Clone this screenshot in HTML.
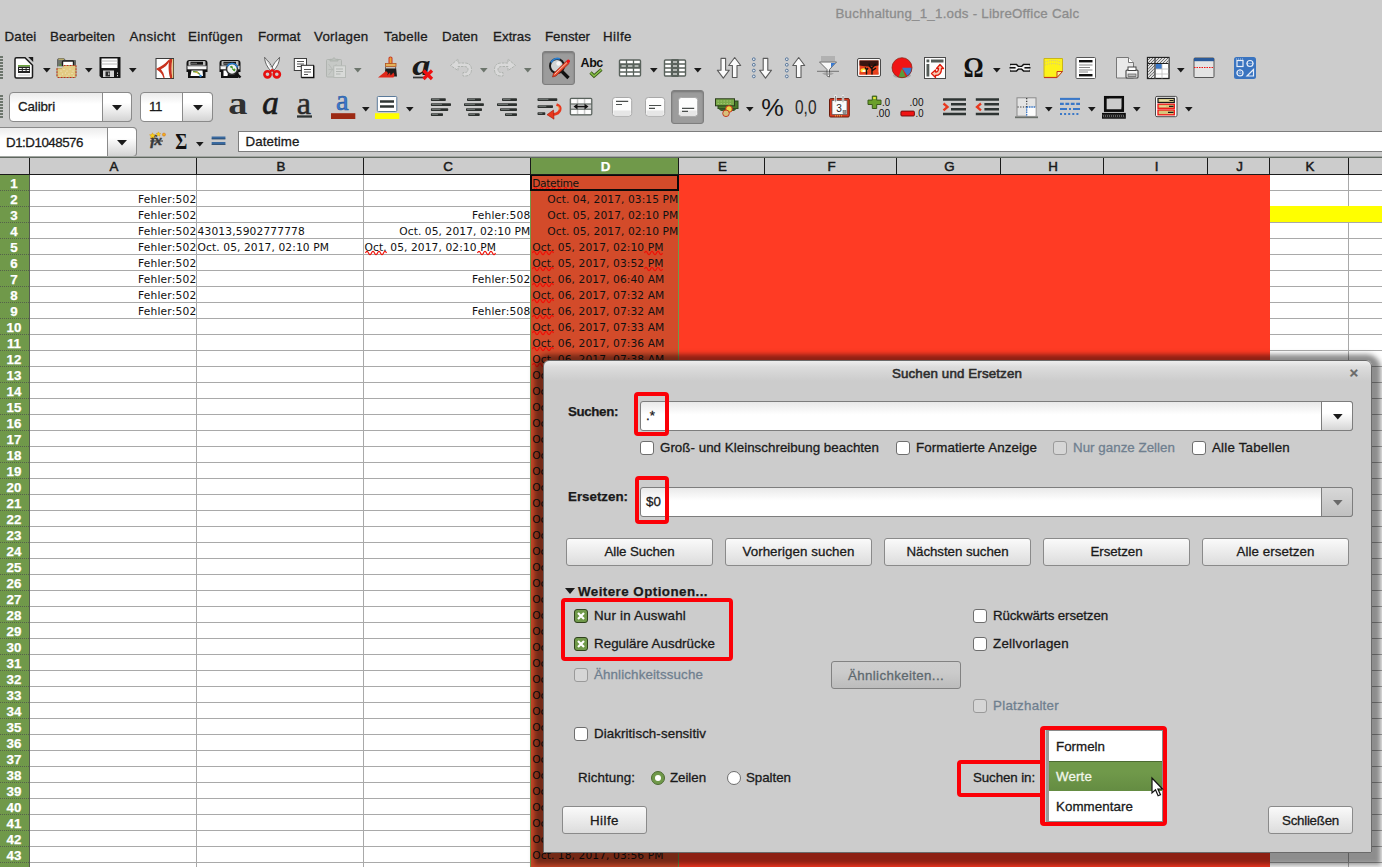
<!DOCTYPE html>
<html lang="de"><head><meta charset="utf-8"><title>Buchhaltung_1_1.ods - LibreOffice Calc</title>
<style>
html,body{margin:0;padding:0}
body{width:1382px;height:867px;overflow:hidden;background:#cccccc;position:relative;font-family:"Liberation Sans",sans-serif}
.t{position:absolute;white-space:pre;display:block}
.k{-webkit-text-stroke:.3px currentColor}
.kb{-webkit-text-stroke:.25px currentColor}
.r{position:absolute;box-sizing:border-box}
svg{position:absolute;overflow:visible}
.btn{position:absolute;box-sizing:border-box;border:1px solid #8a8a8a;border-radius:3px;background:linear-gradient(#fafafa,#dcdcdc)}
.inp{position:absolute;box-sizing:border-box;border:1px solid #7d7d7d;border-radius:3px;background:linear-gradient(#e9e9e9 0,#fff 45%)}
.cb{position:absolute;box-sizing:border-box;width:14px;height:14px;border:1px solid #6e6e6e;border-radius:3px;background:#fff}
.cb.dis{background:#d6d6d6;border-color:#9a9a9a}
.cb.on{background:#70994a;border-color:#2f421d}
.rb{position:absolute;box-sizing:border-box;width:14px;height:14px;border:1px solid #6e6e6e;border-radius:50%;background:#fff}
.ann{position:absolute;box-sizing:border-box;border:4px solid #fb0007;border-radius:4px}
</style></head><body>

<span class="t k" style="left:835.50px;top:4.88px;font:400 13.33px/17px 'Liberation Sans', sans-serif;color:#8c8c8c;letter-spacing:0.226px;">Buchhaltung_1_1.ods - LibreOffice Calc</span>
<span class="t k" style="left:4.50px;top:27.68px;font:400 13.33px/17px 'Liberation Sans', sans-serif;color:#1c1c1c;letter-spacing:0.176px;">Datei</span>
<span class="t k" style="left:50.00px;top:27.68px;font:400 13.33px/17px 'Liberation Sans', sans-serif;color:#1c1c1c;letter-spacing:0.052px;">Bearbeiten</span>
<span class="t k" style="left:129.50px;top:27.68px;font:400 13.33px/17px 'Liberation Sans', sans-serif;color:#1c1c1c;letter-spacing:0.327px;">Ansicht</span>
<span class="t k" style="left:188.00px;top:27.68px;font:400 13.33px/17px 'Liberation Sans', sans-serif;color:#1c1c1c;letter-spacing:0.297px;">Einfügen</span>
<span class="t k" style="left:258.00px;top:27.68px;font:400 13.33px/17px 'Liberation Sans', sans-serif;color:#1c1c1c;letter-spacing:0.047px;">Format</span>
<span class="t k" style="left:314.00px;top:27.68px;font:400 13.33px/17px 'Liberation Sans', sans-serif;color:#1c1c1c;letter-spacing:0.234px;">Vorlagen</span>
<span class="t k" style="left:384.00px;top:27.68px;font:400 13.33px/17px 'Liberation Sans', sans-serif;color:#1c1c1c;letter-spacing:0.251px;">Tabelle</span>
<span class="t k" style="left:442.00px;top:27.68px;font:400 13.33px/17px 'Liberation Sans', sans-serif;color:#1c1c1c;letter-spacing:0.086px;">Daten</span>
<span class="t k" style="left:493.00px;top:27.68px;font:400 13.33px/17px 'Liberation Sans', sans-serif;color:#1c1c1c;letter-spacing:0.037px;">Extras</span>
<span class="t k" style="left:545.00px;top:27.68px;font:400 13.33px/17px 'Liberation Sans', sans-serif;color:#1c1c1c;letter-spacing:-0.027px;">Fenster</span>
<span class="t k" style="left:603.00px;top:27.68px;font:400 13.33px/17px 'Liberation Sans', sans-serif;color:#1c1c1c;letter-spacing:0.467px;">Hilfe</span>
<div class="r" style="left:0;top:56px;width:3px;height:24px;background:repeating-linear-gradient(#6c756c 0,#6c756c 2px,transparent 2px,transparent 3px)"></div>
<div class="r" style="left:0;top:95px;width:3px;height:24px;background:repeating-linear-gradient(#6c756c 0,#6c756c 2px,transparent 2px,transparent 3px)"></div>
<div class="r" style="left:542px;top:51px;width:33px;height:34px;background:#9c9c9c;border:1px solid #7e7e7e;border-radius:3px;box-shadow:inset 0 1px 2px rgba(0,0,0,.25)"></div>
<svg style="left:12.0px;top:56.0px" width="24" height="24" viewBox="0 0 24 24"><path d="M4.500 1.700h8.500l7.500 7.500v11.300q0 1.500-1.500 1.500h-14.500q-1.500 0-1.500-1.500v-17.300q0-1.500 1.500-1.500z" fill="#fdfdfd" stroke="#1c1c1c" stroke-width="1.500"/><path d="M16.200 1h5v5z" fill="#1c1c1c"/><rect x="6" y="9" width="12" height="1.700" fill="#6aa33a"/><rect x="6" y="10.700" width="12" height="6.300" fill="#222"/><path d="M7 12.500h2.800M10.800 12.500h2.800M14.600 12.500h2.600M7 14.500h2.800M10.800 14.500h2.800M14.600 14.500h2.600" stroke="#f4f4f4" stroke-width="1.100"/><path d="M6 19h12" stroke="#c4c4c4" stroke-width="1"/></svg>
<svg style="left:55.0px;top:56.0px" width="24" height="24" viewBox="0 0 24 24"><path d="M2.500 4q0-1.500 1.500-1.500h5l1.500 2h10v6h-18z" fill="#6f746c" stroke="#555" stroke-width=".8"/><path d="M3.500 3.200h5.500" stroke="#d8c46a" stroke-width="1"/><rect x="7.500" y="5" width="11" height="6" rx=".8" fill="#fff" stroke="#1c1c1c" stroke-width="1.400"/><path d="M2 12h5l1.500-2.500h12.500v11q0 1-1 1h-17q-1 0-1-1z" fill="#e2ca82" stroke="#8a7a4a" stroke-width=".8"/><path d="M9 9.500h12v11.500M2 12.500v8.500M3 21.500h17" stroke="#d0201a" stroke-width="1.100" stroke-dasharray="1.200 1.800" fill="none"/><path d="M2.500 11h5.500" stroke="#f4f4f4" stroke-width="1"/><path d="M4 9.800l1.300-2.300 1.300 2.300z" fill="#4a9a2a"/><g fill="#f2ead0"><circle cx="6" cy="15" r=".6"/><circle cx="9" cy="13.500" r=".6"/><circle cx="12" cy="15" r=".6"/><circle cx="15" cy="13" r=".6"/><circle cx="18" cy="15" r=".6"/><circle cx="7.500" cy="18" r=".6"/><circle cx="10.500" cy="17" r=".6"/><circle cx="14" cy="18" r=".6"/><circle cx="17" cy="17.500" r=".6"/><circle cx="5" cy="20" r=".6"/><circle cx="12" cy="20" r=".6"/><circle cx="18.500" cy="20" r=".6"/></g></svg>
<svg style="left:98.0px;top:56.0px" width="24" height="24" viewBox="0 0 24 24"><path d="M1.500 1.500q0-.5.5-.5h20q.5 0 .5.500v20q0 .5-.5.500h-18.500l-2-2z" fill="#161616"/><rect x="3.500" y="2.500" width="16" height="9.500" fill="#fdfdfd"/><path d="M3.500 5h16M3.500 8h16" stroke="#b0b0b0" stroke-width=".9"/><rect x="5" y="14.500" width="11" height="6.500" fill="#d4d4d4"/><rect x="7.500" y="15.500" width="4.500" height="5" fill="#2a2a2a"/><path d="M10 16.500h1.500v2.500h-1.500z" fill="#aaa"/><path d="M19.500 16.500v1.300M19.500 19v1.300" stroke="#ddd" stroke-width="1"/></svg>
<svg style="left:152.5px;top:56.0px" width="24" height="24" viewBox="0 0 24 24"><rect x="3" y="2.500" width="17.500" height="20" fill="#fdfdfd" stroke="#3a3a3a" stroke-width="1"/><path d="M16 4.500c-3 3.500-7 6.500-12 8.500 3.500 2 6 5 7 8.500-.5-3-2-6-4-8.500 4-2 7.500-4.500 9-8.500z" fill="#c8321e" stroke="#c8321e" stroke-width="1.300" stroke-linejoin="round"/><path d="M16.500 3c-1.300 5-1.300 13 .8 19.500l2-.5c-1-6-1-13 0-19z" fill="#c8321e"/><path d="M19.800 3v19" stroke="#e0b04a" stroke-width=".9"/></svg>
<svg style="left:185.0px;top:56.0px" width="24" height="24" viewBox="0 0 24 24"><path d="M1.500 7q0-3 3-3h15q3 0 3 3v9h-2v6h-17.500v-6h-1.500z" fill="#111"/><rect x="3.500" y="5" width="17" height="4.500" rx="1" fill="#bcbcbc"/><rect x="5.500" y="5.800" width="12.500" height="2.900" fill="#111"/><path d="M6.500 7.300h1M8.500 7.300h1M10.500 7.300h1" stroke="#ccc" stroke-width="1"/><rect x="2.500" y="10" width="19" height="3.300" fill="#f6f6f6"/><path d="M2.500 10h19" stroke="#999" stroke-width="1"/><path d="M6.500 14.500h11l.5 5.500h-12.500z" fill="#fff"/><path d="M8 15.500l4 .5 3 2.500" stroke="#6a9a3a" stroke-width="1.400" fill="none"/><path d="M10.500 16l2.500 1" stroke="#e8b43a" stroke-width="1.200"/><circle cx="15.500" cy="20" r="1.200" fill="#2a7fd0"/></svg>
<svg style="left:218.0px;top:56.0px" width="24" height="24" viewBox="0 0 24 24"><path d="M1.500 7q0-3 3-3h15q3 0 3 3v9h-2v6h-17.500v-6h-1.500z" fill="#111"/><rect x="3.500" y="5" width="17" height="4.500" rx="1" fill="#bcbcbc"/><rect x="5.500" y="5.800" width="12.500" height="2.900" fill="#111"/><path d="M6.500 7.300h1M8.500 7.300h1M10.500 7.300h1" stroke="#ccc" stroke-width="1"/><rect x="2.500" y="10" width="19" height="3.300" fill="#f6f6f6"/><path d="M2.500 10h19" stroke="#999" stroke-width="1"/><path d="M5.500 14.500h5l-1 5.500h-4z" fill="#fff"/><circle cx="14" cy="13" r="5.500" fill="#eef2f0" stroke="#333" stroke-width="1.500"/><path d="M9 10.500a5.700 5.700 0 0 1 10.500 1" stroke="#2a7fd0" stroke-width="1.600" fill="none"/><path d="M12 11l2-.8.5 2.500M14.500 13.500l2.500-.5-.5 2z" fill="#4a9a2e" stroke="#4a9a2e" stroke-width="1"/><path d="M18 17l4.500 4.500" stroke="#111" stroke-width="2.400"/></svg>
<svg style="left:259.5px;top:56.0px" width="24" height="24" viewBox="0 0 24 24"><path d="M19.600 1.300q-5.500 5-8.900 12.300l2.200 1.800q6.500-6.500 6.700-14.100z" fill="#fbfbfb" stroke="#555" stroke-width=".9"/><path d="M4.600 1.300q5.500 5 8.900 12.300l-2.200 1.800q-6.500-6.500-6.700-14.100z" fill="#fbfbfb" stroke="#555" stroke-width=".9"/><path d="M6 3.500q3.500 4.500 5.500 9" stroke="#c8c8c8" stroke-width="1" fill="none"/><circle cx="7.500" cy="18.300" r="3.100" fill="none" stroke="#e60f0f" stroke-width="2.600"/><circle cx="16.800" cy="18.300" r="3.100" fill="none" stroke="#e60f0f" stroke-width="2.600"/><path d="M9.800 15.800l2.300-1.800 2.300 1.800" stroke="#e60f0f" stroke-width="2" fill="none"/></svg>
<svg style="left:292.0px;top:56.0px" width="24" height="24" viewBox="0 0 24 24"><rect x="2.300" y="2.500" width="12.200" height="12" fill="#fdfdfd" stroke="#3c3c3c" stroke-width="1"/><path d="M5 5.500h7M5 8h7M5 10.500h4" stroke="#555" stroke-width="1.100"/><rect x="9.300" y="9.300" width="12.200" height="12" fill="#fdfdfd" stroke="#2a2a2a" stroke-width="1"/><path d="M9.500 21.600h12.300v-12" stroke="#111" stroke-width="1.300" fill="none"/><path d="M12 13.500h7M12 16h7M12 18.500h4" stroke="#555" stroke-width="1.100"/></svg>
<svg style="left:324.0px;top:56.0px" width="24" height="24" viewBox="0 0 24 24"><rect x="2.500" y="3.500" width="15" height="17.500" rx="1" fill="#c6c9c6" stroke="#b0b4b0" stroke-width="1"/><path d="M6 5v-1.700h2.300l1.700-1.800 1.700 1.800h2.300v1.700z" fill="#bcc0bc" stroke="#aab0aa" stroke-width=".8"/><path d="M4.500 8l8 11M12.500 8l-8 11M4.500 13.500h8" stroke="#b4b8b4" stroke-width=".8"/><rect x="9.800" y="9.800" width="11.700" height="11.700" fill="#d8dad8" stroke="#b6bab6" stroke-width="1"/><path d="M12 13h7M12 15.500h7M12 18h4.500" stroke="#b0b4b0" stroke-width="1"/></svg>
<svg style="left:378.0px;top:56.0px" width="24" height="24" viewBox="0 0 24 24"><path d="M11 1.500q1.500-1 3 0v6h-3z" fill="#e8a23a" stroke="#c8321e" stroke-width="1"/><rect x="7.500" y="7.500" width="10.500" height="3" fill="#e3b25a" stroke="#b0521e" stroke-width=".8"/><path d="M7.500 11h10.500l1 9.500h-12.500z" fill="#1c1c1c"/><path d="M8 11.800h9.500" stroke="#eee" stroke-width="1.200"/><path d="M0 21.500l8-6.500 2 2-1 2.500 3-3 .500 3 3-3 1 2.500-1 2.500z" fill="#e0281a"/></svg>
<svg style="left:411.0px;top:56.0px" width="24" height="24" viewBox="0 0 24 24"><text transform="translate(1.300 18.700) scale(1.220 1)" font-family="'Liberation Serif',serif" font-style="italic" font-weight="700" font-size="30" fill="#1a1a1a">a</text><path d="M2 21.500h11" stroke="#333" stroke-width="1.700"/><path d="M12.500 14.500l8.500 8.500M21 14.500l-8.500 8.500" stroke="#ee1111" stroke-width="3.200"/></svg>
<svg style="left:449.0px;top:56.0px" width="24" height="24" viewBox="0 0 24 24"><path d="M1.500 9.500l7.500-6.500v4h6q7.500 0 7.500 6.500t-6.500 6.500h-2v-3.500h1.500q3.500 0 3.500-3t-4-3h-6v4z" fill="#d9d9d9" stroke="#aeb2ae" stroke-width="1" stroke-dasharray="2.500 1" stroke-linejoin="round"/></svg>
<svg style="left:493.0px;top:56.0px" width="24" height="24" viewBox="0 0 24 24"><path d="M22.500 9.500l-7.500-6.500v4h-6q-7.500 0-7.500 6.500t6.500 6.500h2v-3.500h-1.500q-3.500 0-3.500-3t4-3h6v4z" fill="#d9d9d9" stroke="#aeb2ae" stroke-width="1" stroke-dasharray="2.500 1" stroke-linejoin="round"/></svg>
<svg style="left:546.5px;top:56.0px" width="24" height="24" viewBox="0 0 24 24"><circle cx="10" cy="10" r="7" fill="#d0d4d4" stroke="#1a1a1a" stroke-width="2"/><path d="M4 6.500a7.200 7.200 0 0 1 9-3.500" stroke="#2a7fd0" stroke-width="1.800" fill="none"/><circle cx="11.500" cy="7.500" r="2.200" fill="#f6f6f6"/><path d="M15 15.500l6.500 6.500" stroke="#111" stroke-width="3.400"/><path d="M5.500 21l1-3.500 13-12.500 2.500 2.500-13 12.500z" fill="#e8472a" stroke="#8a1a0a" stroke-width=".6"/><path d="M7.500 18.500l12.500-12" stroke="#f6c8b0" stroke-width="1"/><circle cx="21.300" cy="5.300" r="1.700" fill="#ee1111"/></svg>
<svg style="left:580.0px;top:56.0px" width="24" height="24" viewBox="0 0 24 24"><text x="0.500" y="11" font-family="'Liberation Sans',sans-serif" font-weight="700" font-size="12.500" fill="#111" letter-spacing="-.4">Abc</text><path d="M10.500 16.500l3.500 3.500 7.500-6.500" stroke="#3a5a1a" stroke-width="3.200" fill="none"/><path d="M10.500 16.500l3.500 3.500 7.500-6.500" stroke="#8ac24a" stroke-width="1.500" fill="none"/></svg>
<svg style="left:618.0px;top:56.0px" width="24" height="24" viewBox="0 0 24 24"><rect x="1.500" y="4" width="21" height="16" rx="1" fill="#fff" stroke="#59625c" stroke-width="1.400"/><rect x="1.500" y="8" width="21" height="4" fill="#59625c"/><path d="M3.500 10h4.500M10 10h4.500M16.500 10h4" stroke="#cfd4cf" stroke-width="1.400"/><path d="M1.500 8h21M1.500 12h21M1.500 16h21M8.500 4v16M15.500 4v16" stroke="#59625c" stroke-width="1.300" fill="none"/></svg>
<svg style="left:663.0px;top:56.0px" width="24" height="24" viewBox="0 0 24 24"><rect x="1.500" y="4" width="21" height="16" rx="1" fill="#fff" stroke="#59625c" stroke-width="1.400"/><rect x="8.500" y="3" width="7" height="18" fill="#59625c"/><path d="M10 6h4M10 10h4M10 14h4M10 18h4" stroke="#cfd4cf" stroke-width="1.500"/><path d="M1.500 8h21M1.500 12h21M1.500 16h21M8.500 4v16M15.500 4v16" stroke="#59625c" stroke-width="1.300" fill="none"/></svg>
<svg style="left:717.0px;top:56.0px" width="24" height="24" viewBox="0 0 24 24"><path d="M4.0 2.4v11.8h-3.700l6 8 6-8h-3.700v-11.8z" fill="#fbfbfb" stroke="#5c5c5c" stroke-width="1.100" stroke-linejoin="round"/><path d="M15.399999999999999 21.5v-12.0h-3.700l6-8 6 8h-3.700v12.0z" fill="#fbfbfb" stroke="#5c5c5c" stroke-width="1.100" stroke-linejoin="round"/></svg>
<svg style="left:750.0px;top:56.0px" width="24" height="24" viewBox="0 0 24 24"><g fill="#dfe6ee" stroke="#4a6a90" stroke-width=".9"><circle cx="3.800" cy="3.200" r="1.400"/><circle cx="3.800" cy="8.800" r="1.400"/><circle cx="3.800" cy="14.600" r="1.400"/><circle cx="3.800" cy="20.400" r="1.400"/></g><path d="M13.2 2.4v11.8h-3.700l6 8 6-8h-3.700v-11.8z" fill="#fbfbfb" stroke="#5c5c5c" stroke-width="1.100" stroke-linejoin="round"/></svg>
<svg style="left:783.0px;top:56.0px" width="24" height="24" viewBox="0 0 24 24"><g fill="#dfe6ee" stroke="#4a6a90" stroke-width=".9"><circle cx="3.800" cy="3.200" r="1.400"/><circle cx="3.800" cy="8.800" r="1.400"/><circle cx="3.800" cy="14.600" r="1.400"/><circle cx="3.800" cy="20.400" r="1.400"/></g><path d="M13.399999999999999 21.5v-12.0h-3.700l6-8 6 8h-3.700v12.0z" fill="#fbfbfb" stroke="#5c5c5c" stroke-width="1.100" stroke-linejoin="round"/></svg>
<svg style="left:815.5px;top:56.0px" width="24" height="24" viewBox="0 0 24 24"><rect x="5" y="0" width="14" height="5.500" fill="#9a9a9a" opacity=".55"/><path d="M3.500 6h17l-7 7.500v7.500l-2.500-1v-6.500z" fill="#f8f8f8" stroke="#6a6a6a" stroke-width="1"/><path d="M15 7h4.500l-4.500 4.500z" fill="#3a7ad0"/><path d="M6 17.500q6-2.500 12 0l-3 1.500h-6z" fill="#8a8a8a" opacity=".6"/><path d="M1.500 15.300h21" stroke="#1a1a1a" stroke-width="1" stroke-dasharray="1 1"/></svg>
<svg style="left:857.0px;top:56.0px" width="24" height="24" viewBox="0 0 24 24"><rect x="0.500" y="2.500" width="23" height="18" rx="1.500" fill="#fafafa" stroke="#4a4a4a" stroke-width="1"/><rect x="2.500" y="4.500" width="19" height="14" fill="#e8421e"/><path d="M2.500 4.500h19v5q-9 2-19 0z" fill="#3a1410"/><ellipse cx="7" cy="14.500" rx="3.500" ry="2.300" fill="#ffe23a"/><ellipse cx="7" cy="15" rx="1.800" ry="1" fill="#fff"/><path d="M2.500 16.500q9-1.500 19 0v2h-19z" fill="#e8421e"/><path d="M15 18.500v-7.500M15 13l-3-3.500M15 12l3.500-4M15.500 14.500l3.500-2.500M12.500 10l-.5-2.500M17.500 9.500l1.500-1.500M9.500 18.500v-5l-1.500-2M9.500 14l1.500-2" stroke="#111" stroke-width="1.400" fill="none"/></svg>
<svg style="left:890.0px;top:56.0px" width="24" height="24" viewBox="0 0 24 24"><ellipse cx="12" cy="19.500" rx="9" ry="2.800" fill="#8a8a8a" opacity=".5"/><circle cx="12" cy="11.700" r="10" fill="#f01414"/><path d="M12 11.700h10a10 10 0 0 1-4.500 8.300z" fill="#3a78c8"/><path d="M12 12.500l4 8.500a10 10 0 0 1-7.500 0z" fill="#5a9a3a"/><circle cx="12" cy="11.700" r="10" fill="none" stroke="#8a1a0a" stroke-width=".7"/></svg>
<svg style="left:923.0px;top:56.0px" width="24" height="24" viewBox="0 0 24 24"><rect x="1.500" y="1.500" width="21" height="21" fill="#fdfdfd" stroke="#4a4a4a" stroke-width="1"/><rect x="3.500" y="3.500" width="2.800" height="2.800" fill="#555c58"/><rect x="8" y="3.500" width="12.500" height="3" fill="#555c58"/><rect x="3.500" y="8" width="2.800" height="12.500" fill="#555c58"/><path d="M8.500 17.500l4-3.500v2q3 0 3-3.500h-2l3.500-4 3.500 4h-2q0 7-6 7v2z" fill="#f8c8b0" stroke="#e01a0a" stroke-width="1.300" stroke-linejoin="round"/></svg>
<svg style="left:963.0px;top:56.0px" width="24" height="24" viewBox="0 0 24 24"><text transform="translate(0.500 21.400) scale(.870 1)" font-family="'Liberation Serif',serif" font-weight="700" font-size="28.800" fill="#111">Ω</text></svg>
<svg style="left:1008.0px;top:56.0px" width="24" height="24" viewBox="0 0 24 24"><path d="M2 8.500h6.500l2 2h3l2-2h6.500M2 15h6.500l2-2h3l2 2h6.500" stroke="#111" stroke-width="1.500" fill="none"/><path d="M3 10h4.500l2 1.700h5l2-1.700h4.500M3 13.500h4.500l2-1.700M14.500 11.800l2 1.700h4.500" stroke="#f4f4f4" stroke-width="1.300" fill="none"/><path d="M1.500 11.700h6M16.500 11.700h6" stroke="#111" stroke-width="1.400"/></svg>
<svg style="left:1041.0px;top:56.0px" width="24" height="24" viewBox="0 0 24 24"><path d="M3 2.500h18.500v13l-5.500 6h-13z" fill="#fdf21a" stroke="#c8b41a" stroke-width="1"/><path d="M4 6q8 -3 16 0M4 9q8 -3 16 0" stroke="#d8c87a" stroke-width="1.200" fill="none" stroke-dasharray="1 1"/><path d="M21.500 15.500h-5.500v6z" fill="#f8f0a0" stroke="#c23a1a" stroke-width="1"/><path d="M3 21.500h13" stroke="#c23a1a" stroke-width="1.200"/></svg>
<svg style="left:1074.0px;top:56.0px" width="24" height="24" viewBox="0 0 24 24"><rect x="2" y="1.500" width="19.500" height="21" rx="1" fill="#fff" stroke="#555" stroke-width="1"/><rect x="5" y="4" width="13.500" height="2.400" fill="#111"/><rect x="5" y="18" width="13.500" height="2.400" fill="#111"/><path d="M5 9h13.500M5 11.500h11M5 14h13.500M5 16h9" stroke="#888" stroke-width="1"/></svg>
<svg style="left:1115.0px;top:56.0px" width="24" height="24" viewBox="0 0 24 24"><path d="M1.500 1.500h12l5 5v15.500h-17z" fill="#e9e9e9" stroke="#777" stroke-width="1"/><path d="M13.500 1.500v5h5" fill="#fff" stroke="#777" stroke-width="1"/><rect x="11" y="14" width="12" height="8" rx="1" fill="#f4f4f4" stroke="#444" stroke-width="1.100"/><rect x="13" y="11" width="8" height="3.500" fill="#fff" stroke="#444" stroke-width="1"/><rect x="13" y="18" width="8" height="2.500" fill="#bbb" stroke="#555" stroke-width=".7"/></svg>
<svg style="left:1146.0px;top:56.0px" width="24" height="24" viewBox="0 0 24 24"><rect x="1.500" y="1.500" width="21.500" height="21" fill="#fff" stroke="#222" stroke-width="1.300"/><defs><pattern id="hat" width="3" height="3" patternUnits="userSpaceOnUse"><path d="M0 3l3-3" stroke="#555" stroke-width=".8"/></pattern></defs><rect x="2" y="2" width="20.500" height="5.500" fill="#ddd"/><rect x="2" y="2" width="20.500" height="5.500" fill="url(#hat)"/><rect x="2" y="2" width="7" height="20" fill="#ddd"/><rect x="2" y="2" width="7" height="20" fill="url(#hat)"/><rect x="9.500" y="7.500" width="6.500" height="5.500" fill="#3a78c8"/><path d="M9 2v20.500M16 7.500v15M2 7.500h20.500M2 13h20.500M2 18h20.500" stroke="#bbb" stroke-width=".8"/><path d="M9 2v20.500M2 7.500h20.500" stroke="#222" stroke-width="1"/></svg>
<svg style="left:1192.0px;top:56.0px" width="24" height="24" viewBox="0 0 24 24"><rect x="2" y="2" width="20" height="19.500" rx="1" fill="#e4e4e4" stroke="#555" stroke-width="1"/><rect x="2" y="2" width="20" height="3.200" fill="#2a5a9a"/><path d="M2 11.500h20" stroke="#ee1111" stroke-width="1.200" stroke-dasharray="1.500 1"/></svg>
<svg style="left:1233.0px;top:56.0px" width="24" height="24" viewBox="0 0 24 24"><rect x="1" y="1" width="22" height="22" rx="2.500" fill="#3a74c0"/><g fill="none" stroke="#e8eef8" stroke-width="1.200"><rect x="4" y="4.500" width="6" height="6"/><circle cx="17" cy="7.500" r="3"/><circle cx="7" cy="17" r="3"/><path d="M14 20h6.500v-6.500z"/></g><path d="M3 3h8M13.500 7.500h7M7 13v8M3.500 17h7" stroke="#e8eef8" stroke-width=".7" stroke-dasharray="1 1"/></svg>
<svg style="left:43px;top:68px" width="8" height="5" viewBox="0 0 8 5"><path d="M0 0h7.600l-3.800 4.400z" fill="#1a1a1a"/></svg>
<svg style="left:85px;top:68px" width="8" height="5" viewBox="0 0 8 5"><path d="M0 0h7.600l-3.800 4.400z" fill="#1a1a1a"/></svg>
<svg style="left:129px;top:68px" width="8" height="5" viewBox="0 0 8 5"><path d="M0 0h7.600l-3.800 4.400z" fill="#1a1a1a"/></svg>
<svg style="left:650px;top:68px" width="8" height="5" viewBox="0 0 8 5"><path d="M0 0h7.600l-3.800 4.400z" fill="#1a1a1a"/></svg>
<svg style="left:694px;top:68px" width="8" height="5" viewBox="0 0 8 5"><path d="M0 0h7.600l-3.800 4.400z" fill="#1a1a1a"/></svg>
<svg style="left:993px;top:68px" width="8" height="5" viewBox="0 0 8 5"><path d="M0 0h7.600l-3.800 4.400z" fill="#1a1a1a"/></svg>
<svg style="left:1177px;top:68px" width="8" height="5" viewBox="0 0 8 5"><path d="M0 0h7.600l-3.800 4.400z" fill="#1a1a1a"/></svg>
<svg style="left:354px;top:68px" width="8" height="5" viewBox="0 0 8 5"><path d="M0 0h7.600l-3.800 4.400z" fill="#6c756c"/></svg>
<svg style="left:480px;top:68px" width="8" height="5" viewBox="0 0 8 5"><path d="M0 0h7.600l-3.800 4.400z" fill="#6c756c"/></svg>
<svg style="left:524px;top:68px" width="8" height="5" viewBox="0 0 8 5"><path d="M0 0h7.600l-3.800 4.400z" fill="#6c756c"/></svg>
<div class="inp" style="left:9px;top:92px;width:123px;height:30px;border-color:#8a8a8a;border-radius:4px;background:linear-gradient(#ececec 0,#fff 40%)"></div>
<div class="r" style="left:102px;top:92px;width:30px;height:30px;border:1px solid #8a8a8a;border-radius:0 4px 4px 0;background:linear-gradient(#fff 0,#fff 35%,#d4d4d4 100%)"></div>
<svg style="left:112.0px;top:104.5px" width="10" height="6" viewBox="0 0 10 6"><path d="M0 0h10l-5 5.600z" fill="#1a1a1a"/></svg>
<span class="t k" style="left:18.00px;top:98.38px;font:400 13.33px/17px 'Liberation Sans', sans-serif;color:#1a1a1a;letter-spacing:-0.111px;">Calibri</span>
<div class="inp" style="left:140px;top:92px;width:73px;height:30px;border-color:#8a8a8a;border-radius:4px;background:linear-gradient(#ececec 0,#fff 40%)"></div>
<div class="r" style="left:182px;top:92px;width:31px;height:30px;border:1px solid #8a8a8a;border-radius:0 4px 4px 0;background:linear-gradient(#fff 0,#fff 35%,#d4d4d4 100%)"></div>
<svg style="left:192.5px;top:104.5px" width="10" height="6" viewBox="0 0 10 6"><path d="M0 0h10l-5 5.600z" fill="#1a1a1a"/></svg>
<span class="t k" style="left:149.00px;top:98.38px;font:400 13.33px/17px 'Liberation Sans', sans-serif;color:#1a1a1a;letter-spacing:-0.419px;">11</span>
<div class="r" style="left:671px;top:90px;width:33px;height:34px;background:#9c9c9c;border:1px solid #7e7e7e;border-radius:3px;box-shadow:inset 0 1px 2px rgba(0,0,0,.25)"></div>
<svg style="left:226.0px;top:95.0px" width="24" height="24" viewBox="0 0 24 24"><text transform="translate(2.200 19) scale(1.200 1)" font-family="'Liberation Serif',serif" font-weight="700" font-size="32" fill="#303030">a</text></svg>
<svg style="left:259.0px;top:95.0px" width="24" height="24" viewBox="0 0 24 24"><text x="3.200" y="19" font-family="'Liberation Serif',serif" font-style="italic" font-size="33" fill="#1a1a1a" stroke="#1a1a1a" stroke-width=".7">a</text></svg>
<svg style="left:292.0px;top:95.0px" width="24" height="24" viewBox="0 0 24 24"><text x="4.800" y="18.600" font-family="'Liberation Serif',serif" font-size="32" fill="#2a2a2a" stroke="#2a2a2a" stroke-width=".5">a</text><path d="M5 21.500h15" stroke="#2e3433" stroke-width="2.300"/></svg>
<svg style="left:331.0px;top:95.0px" width="24" height="24" viewBox="0 0 24 24"><text x="5" y="14.500" font-family="'Liberation Serif',serif" font-size="28.500" fill="#3a7ad0" stroke="#2a5aa0" stroke-width=".6">a</text><rect x="0" y="18.200" width="24.300" height="5.800" fill="#9c2a14"/></svg>
<svg style="left:375.0px;top:95.0px" width="24" height="24" viewBox="0 0 24 24"><rect x="2.300" y="1.500" width="19.500" height="15" rx="1" fill="#fdfdfd" stroke="#5a7a9a" stroke-width="1"/><path d="M5 6.500h14M5 11.500h14" stroke="#2e3433" stroke-width="2.600"/><rect x="0" y="18.200" width="24.300" height="5.800" fill="#ffff00"/></svg>
<svg style="left:429.0px;top:95.0px" width="24" height="24" viewBox="0 0 24 24"><rect x="1.9" y="3.2" width="14.9" height="2.800" rx=".7" fill="#2c302e"/><path d="M2.9 4.3h7.5" stroke="#9aa09c" stroke-width=".7"/><rect x="1.9" y="8.2" width="20.1" height="2.800" rx=".7" fill="#2c302e"/><path d="M2.9 9.3h10.1" stroke="#9aa09c" stroke-width=".7"/><rect x="1.9" y="13.2" width="17.3" height="2.800" rx=".7" fill="#2c302e"/><path d="M2.9 14.3h8.7" stroke="#9aa09c" stroke-width=".7"/><rect x="1.9" y="18.2" width="12.1" height="2.800" rx=".7" fill="#2c302e"/><path d="M2.9 19.3h6.0" stroke="#9aa09c" stroke-width=".7"/></svg>
<svg style="left:462.0px;top:95.0px" width="24" height="24" viewBox="0 0 24 24"><rect x="5" y="3.2" width="14.0" height="2.800" rx=".7" fill="#2c302e"/><path d="M6 4.3h7.0" stroke="#9aa09c" stroke-width=".7"/><rect x="2" y="8.2" width="19.9" height="2.800" rx=".7" fill="#2c302e"/><path d="M3 9.3h9.9" stroke="#9aa09c" stroke-width=".7"/><rect x="4" y="13.2" width="16.0" height="2.800" rx=".7" fill="#2c302e"/><path d="M5 14.3h8.0" stroke="#9aa09c" stroke-width=".7"/><rect x="6.2" y="18.2" width="11.5" height="2.800" rx=".7" fill="#2c302e"/><path d="M7.2 19.3h5.8" stroke="#9aa09c" stroke-width=".7"/></svg>
<svg style="left:495.0px;top:95.0px" width="24" height="24" viewBox="0 0 24 24"><rect x="7" y="3.2" width="15.0" height="2.800" rx=".7" fill="#2c302e"/><path d="M8 4.3h7.5" stroke="#9aa09c" stroke-width=".7"/><rect x="2" y="8.2" width="20.0" height="2.800" rx=".7" fill="#2c302e"/><path d="M3 9.3h10.0" stroke="#9aa09c" stroke-width=".7"/><rect x="5" y="13.2" width="17.0" height="2.800" rx=".7" fill="#2c302e"/><path d="M6 14.3h8.5" stroke="#9aa09c" stroke-width=".7"/><rect x="10" y="18.2" width="12.0" height="2.800" rx=".7" fill="#2c302e"/><path d="M11 19.3h6.0" stroke="#9aa09c" stroke-width=".7"/></svg>
<svg style="left:536.5px;top:95.0px" width="24" height="24" viewBox="0 0 24 24"><rect x="0.5" y="3.2" width="19.8" height="2.800" rx=".7" fill="#2c302e"/><path d="M1.5 4.3h9.9" stroke="#9aa09c" stroke-width=".7"/><rect x="0.5" y="10.2" width="15.5" height="2.800" rx=".7" fill="#2c302e"/><path d="M1.5 11.3h7.8" stroke="#9aa09c" stroke-width=".7"/><rect x="0.5" y="17.2" width="7.8" height="2.800" rx=".7" fill="#2c302e"/><path d="M1.5 18.3h3.9" stroke="#9aa09c" stroke-width=".7"/><path d="M19.500 9.500q4.500 1.500 3.500 5.500t-7 4.500" stroke="#e8381e" stroke-width="2.800" fill="none"/><path d="M16.500 15l-6.500 4.700 7 4.500z" fill="#e8381e" stroke="#a01a0a" stroke-width=".6"/><path d="M20.500 11q2 1.500 1.500 3.500" stroke="#f8c86a" stroke-width="1" fill="none"/></svg>
<svg style="left:569.0px;top:95.0px" width="24" height="24" viewBox="0 0 24 24"><rect x="1.300" y="3.300" width="21.500" height="16.500" rx="1" fill="#c8c8c8" stroke="#59625c" stroke-width="1.200"/><path d="M2.300 4.300h5.500v4.200h-5.500zM9.300 4.300h5.500v4.200h-5.500zM16.300 4.300h5.500v4.200h-5.500zM2.300 14.700h5.500v4.200h-5.500zM9.300 14.700h5.500v4.200h-5.500zM16.300 14.700h5.500v4.200h-5.500z" fill="#fdfdfd"/><path d="M1.300 9h21.500M1.300 14.200h21.500" stroke="#59625c" stroke-width="1"/><path d="M7 11.600h10" stroke="#111" stroke-width="1.500"/><path d="M4.500 11.600l4-2.800v5.600zM19.500 11.600l-4-2.800v5.600z" fill="#111"/></svg>
<svg style="left:610.0px;top:95.0px" width="24" height="24" viewBox="0 0 24 24"><rect x="2.500" y="2.500" width="19.200" height="18.700" rx="2.800" fill="#fdfdfd" stroke="#a8a8a8" stroke-width="1"/><path d="M3.500 15.500h17.200v3q0 2-2 2h-13.200q-2 0-2-2z" fill="#e6e6e6"/><path d="M6 6.4h12.200M6 9.5h6" stroke="#4a4e4c" stroke-width="1.100"/></svg>
<svg style="left:643.0px;top:95.0px" width="24" height="24" viewBox="0 0 24 24"><rect x="2.500" y="2.500" width="19.200" height="18.700" rx="2.800" fill="#fdfdfd" stroke="#a8a8a8" stroke-width="1"/><path d="M3.500 15.500h17.200v3q0 2-2 2h-13.200q-2 0-2-2z" fill="#e6e6e6"/><path d="M6 10.5h12.200M6 13.4h6" stroke="#4a4e4c" stroke-width="1.100"/></svg>
<svg style="left:676.0px;top:95.0px" width="24" height="24" viewBox="0 0 24 24"><rect x="2.500" y="2.500" width="19.200" height="18.700" rx="2.800" fill="#fdfdfd" stroke="#a8a8a8" stroke-width="1"/><path d="M3.500 15.500h17.200v3q0 2-2 2h-13.200q-2 0-2-2z" fill="#e6e6e6"/><path d="M6 13.4h12.200M6 16.4h6" stroke="#4a4e4c" stroke-width="1.100"/></svg>
<svg style="left:715.0px;top:95.0px" width="24" height="24" viewBox="0 0 24 24"><rect x="3" y="6" width="20" height="7.500" fill="#4a7a2a" stroke="#2a4a1a" stroke-width="1"/><rect x="0.500" y="3.800" width="19" height="7" fill="#7aaa4a" stroke="#2a3a1a" stroke-width="1"/><path d="M2.500 6h15M2.500 8.500h15" stroke="#a8c87a" stroke-width=".8" stroke-dasharray="1.500 1.500"/><path d="M3 13.500h19l-3 2.500h-13z" fill="#3a5a2a"/><circle cx="14" cy="14" r="3.300" fill="#e8d84a" stroke="#d0201a" stroke-width=".9"/><circle cx="11" cy="18.300" r="3.300" fill="#d8c07a" stroke="#c0301a" stroke-width=".9"/></svg>
<svg style="left:761.0px;top:95.0px" width="24" height="24" viewBox="0 0 24 24"><text x="0.200" y="20.700" font-family="'Liberation Sans',sans-serif" font-size="23.500" fill="#161616" textLength="22.500" lengthAdjust="spacingAndGlyphs">%</text></svg>
<svg style="left:794.0px;top:95.0px" width="24" height="24" viewBox="0 0 24 24"><text x="1" y="19" font-family="'Liberation Sans',sans-serif" font-size="21" fill="#2a2a2a" textLength="21.500" lengthAdjust="spacingAndGlyphs">0,0</text></svg>
<svg style="left:827.5px;top:95.0px" width="24" height="24" viewBox="0 0 24 24"><rect x="1.500" y="3.600" width="19.800" height="18.400" rx="1.200" fill="#d8381e" stroke="#6a1a0a" stroke-width="1"/><rect x="4" y="5.500" width="15" height="14" fill="#fafafa" stroke="#555" stroke-width=".7"/><path d="M7.500 1v5.500M15 1v5.500" stroke="#e8e8e8" stroke-width="2.400" stroke-linecap="round"/><path d="M7.500 1v5.500M15 1v5.500" stroke="#666" stroke-width=".7"/><text x="8.300" y="16.800" font-family="'Liberation Sans',sans-serif" font-size="10" fill="#222">3</text><rect x="15" y="15.500" width="3" height="3" fill="#999" stroke="#555" stroke-width=".5"/><path d="M7 20.800h8" stroke="#e8c84a" stroke-width="1" stroke-dasharray="1 1"/></svg>
<svg style="left:867.0px;top:95.0px" width="24" height="24" viewBox="0 0 24 24"><path d="M5.300 1.100h4.400v4h4.300v4.400h-4.300v4h-4.400v-4h-4.300v-4.400h4.300z" fill="#6aa02a" stroke="#3a5a1a" stroke-width="1"/><path d="M6.200 2h2.600v2h-2.600z" fill="#e8e83a"/><text x="15" y="10.900" font-family="'Liberation Sans',sans-serif" font-size="10.500" fill="#111" textLength="8" lengthAdjust="spacingAndGlyphs">.0</text><text x="9" y="21.500" font-family="'Liberation Sans',sans-serif" font-size="10.500" fill="#111" textLength="14" lengthAdjust="spacingAndGlyphs">.00</text></svg>
<svg style="left:900.0px;top:95.0px" width="24" height="24" viewBox="0 0 24 24"><text x="9.500" y="10.900" font-family="'Liberation Sans',sans-serif" font-size="10.500" fill="#111" textLength="14" lengthAdjust="spacingAndGlyphs">.00</text><rect x="0.900" y="16.100" width="13.500" height="4.900" rx="1" fill="#f01414" stroke="#6a0a0a" stroke-width=".9"/><text x="15.500" y="21.500" font-family="'Liberation Sans',sans-serif" font-size="10.500" fill="#111" textLength="8" lengthAdjust="spacingAndGlyphs">.0</text></svg>
<svg style="left:942.0px;top:95.0px" width="24" height="24" viewBox="0 0 24 24"><path d="M1 4.500h23M9 9.300h15M9 14.200h15M1 19h23" stroke="#2e3433" stroke-width="2.500"/><path d="M1.500 8.500l4 3.400-4 3.400" stroke="#e8381e" stroke-width="2.300" fill="none"/></svg>
<svg style="left:975.0px;top:95.0px" width="24" height="24" viewBox="0 0 24 24"><path d="M.8 4.500h23.200M9.400 9.300h14.600M9.400 14.200h14.600M.8 19h23.200" stroke="#2e3433" stroke-width="2.500"/><path d="M6 8.500l-4 3.400 4 3.400" stroke="#e8381e" stroke-width="2.300" fill="none"/></svg>
<svg style="left:1015.0px;top:95.0px" width="24" height="24" viewBox="0 0 24 24"><path d="M0 22.300h23" stroke="#6a706a" stroke-width="1.800"/><rect x="2" y="2.800" width="19" height="18.400" fill="#e4e4e4" stroke="#8a8a8a" stroke-width="1"/><rect x="12" y="12.300" width="8.500" height="8.500" fill="#fdfdfd"/><path d="M11.700 3v9M2.500 12h9" stroke="#333" stroke-width="1.200" stroke-dasharray="1.200 1.500"/><path d="M11.700 12h9.300M11.700 12v9.500" stroke="#3a78c8" stroke-width="1.300" stroke-dasharray="1.500 .8"/></svg>
<svg style="left:1058.0px;top:95.0px" width="24" height="24" viewBox="0 0 24 24"><path d="M2 3.900h20" stroke="#3a78c8" stroke-width="2.100"/><path d="M2 8.900h20" stroke="#3a78c8" stroke-width="2.100" stroke-dasharray="3.800 1.600"/><path d="M2 14h20" stroke="#3a78c8" stroke-width="2.100" stroke-dasharray="7 2 2 2"/><path d="M2 19h20" stroke="#3a78c8" stroke-width="2.100" stroke-dasharray="2 2.100"/></svg>
<svg style="left:1102.0px;top:95.0px" width="24" height="24" viewBox="0 0 24 24"><rect x="3.300" y="2.300" width="17.400" height="13.300" fill="#cccccc" stroke="#0c0c0c" stroke-width="2.700"/><path d="M7 3.500h12.500v9" stroke="#777" stroke-width=".8" fill="none"/><rect x="0" y="17.900" width="23.800" height="5.800" fill="#0c0c0c"/><path d="M1 19.500l1 3M3 19.500l1 3M5 19.500l1 3M7 19.500l1 3M9 19.500l1 3M11 19.500l1 3M13 19.500l1 3M15 19.500l1 3M17 19.500l1 3M19 19.500l1 3M21 19.500l1 3" stroke="#8a8a8a" stroke-width=".8"/></svg>
<svg style="left:1154.0px;top:95.0px" width="24" height="24" viewBox="0 0 24 24"><rect x="1.500" y="1.400" width="21.500" height="20.300" rx="1.500" fill="#fafafa" stroke="#4a4a4a" stroke-width="1"/><rect x="4" y="3.400" width="16.300" height="4.100" fill="#d8cc8a" stroke="#1a1a1a" stroke-width="1.200"/><rect x="4" y="9.200" width="16.300" height="4.100" fill="#d8c47a" stroke="#f01414" stroke-width="1.300"/><rect x="4" y="15" width="16.300" height="4.800" fill="#d8c47a" stroke="#f01414" stroke-width="1.300"/><path d="M6.500 5.500h8M6.500 11.300h6" stroke="#f4f0d0" stroke-width=".9" stroke-dasharray="1 1"/><path d="M15.500 5.500h4M15 11.300h4.500M14 17.400h5.500" stroke="#1a1a1a" stroke-width="1.200"/></svg>
<svg style="left:362px;top:107px" width="8" height="5" viewBox="0 0 8 5"><path d="M0 0h7.600l-3.800 4.400z" fill="#1a1a1a"/></svg>
<svg style="left:406px;top:107px" width="8" height="5" viewBox="0 0 8 5"><path d="M0 0h7.600l-3.800 4.400z" fill="#1a1a1a"/></svg>
<svg style="left:746px;top:107px" width="8" height="5" viewBox="0 0 8 5"><path d="M0 0h7.600l-3.800 4.400z" fill="#1a1a1a"/></svg>
<svg style="left:1045px;top:107px" width="8" height="5" viewBox="0 0 8 5"><path d="M0 0h7.600l-3.800 4.400z" fill="#1a1a1a"/></svg>
<svg style="left:1088px;top:107px" width="8" height="5" viewBox="0 0 8 5"><path d="M0 0h7.600l-3.800 4.400z" fill="#1a1a1a"/></svg>
<svg style="left:1133px;top:107px" width="8" height="5" viewBox="0 0 8 5"><path d="M0 0h7.600l-3.800 4.400z" fill="#1a1a1a"/></svg>
<svg style="left:1185px;top:107px" width="8" height="5" viewBox="0 0 8 5"><path d="M0 0h7.600l-3.800 4.400z" fill="#1a1a1a"/></svg>
<div class="inp" style="left:-4px;top:127px;width:141px;height:30px;border-color:#8a8a8a;border-radius:4px;background:linear-gradient(#ececec 0,#fff 40%)"></div>
<div class="r" style="left:107px;top:127px;width:30px;height:30px;border:1px solid #8a8a8a;border-radius:0 4px 4px 0;background:linear-gradient(#fff 0,#fff 35%,#d4d4d4 100%)"></div>
<svg style="left:117px;top:139.500px" width="10" height="6" viewBox="0 0 10 6"><path d="M0 0h10l-5 5.600z" fill="#1a1a1a"/></svg>
<span class="t k" style="left:6.00px;top:133.58px;font:400 13.33px/17px 'Liberation Sans', sans-serif;color:#1a1a1a;letter-spacing:-0.479px;">D1:D1048576</span>
<svg style="left:147.0px;top:130.0px" width="22" height="22" viewBox="0 0 24 24"><text x="3.500" y="16.800" font-family="'Liberation Serif',serif" font-style="italic" font-weight="700" font-size="17" fill="#3a3a3a" stroke="#3a3a3a" stroke-width=".5" letter-spacing="-1.200">fx</text><path d="M3.500 12h14" stroke="#3a3a3a" stroke-width="1.200"/><path d="M6 3l1 2 2.200.3-1.600 1.500.4 2.200-2-1-2 1 .4-2.200-1.600-1.500 2.200-.3z" fill="#f8d21a" stroke="#d08a1a" stroke-width=".5"/><path d="M12.500 2l.8 1.600 1.800.2-1.300 1.200.3 1.800-1.600-.9-1.600.9.300-1.800-1.300-1.200 1.800-.2z" fill="#f8d21a" stroke="#d08a1a" stroke-width=".4"/><circle cx="18.500" cy="5" r="1.700" fill="#f0b01a" stroke="#d0601a" stroke-width=".5"/></svg>
<svg style="left:171.0px;top:130.0px" width="22" height="22" viewBox="0 0 24 24"><text transform="translate(4.500 20.500) scale(.820 1)" font-family="'Liberation Serif',serif" font-weight="700" font-size="24.500" fill="#111">Σ</text></svg>
<svg style="left:196px;top:142px" width="8" height="5" viewBox="0 0 8 5"><path d="M0 0h7.600l-3.800 4.400z" fill="#1a1a1a"/></svg>
<svg style="left:207.5px;top:130.0px" width="22" height="22" viewBox="0 0 24 24"><path d="M4 8.500h15M4 14.500h15" stroke="#3a6aa0" stroke-width="2.600"/><path d="M4 9.800h15M4 15.800h15" stroke="#1a3a5a" stroke-width=".8"/></svg>
<div class="r" style="left:238px;top:131px;width:1144px;height:21px;background:#fff;border:1px solid #7d7d7d;border-right:0"></div>
<span class="t k" style="left:245.50px;top:132.68px;font:400 13.33px/17px 'Liberation Sans', sans-serif;color:#1a1a1a;letter-spacing:0.083px;">Datetime</span>
<div class="r" style="left:30px;top:175px;width:1352px;height:692px;background:#fff;"></div>
<div class="r" style="left:30px;top:190px;width:1352px;height:1px;background:#a9a9a9;"></div>
<div class="r" style="left:30px;top:206px;width:1352px;height:1px;background:#a9a9a9;"></div>
<div class="r" style="left:30px;top:222px;width:1352px;height:1px;background:#a9a9a9;"></div>
<div class="r" style="left:30px;top:238px;width:1352px;height:1px;background:#a9a9a9;"></div>
<div class="r" style="left:30px;top:254px;width:1352px;height:1px;background:#a9a9a9;"></div>
<div class="r" style="left:30px;top:270px;width:1352px;height:1px;background:#a9a9a9;"></div>
<div class="r" style="left:30px;top:286px;width:1352px;height:1px;background:#a9a9a9;"></div>
<div class="r" style="left:30px;top:302px;width:1352px;height:1px;background:#a9a9a9;"></div>
<div class="r" style="left:30px;top:318px;width:1352px;height:1px;background:#a9a9a9;"></div>
<div class="r" style="left:30px;top:334px;width:1352px;height:1px;background:#a9a9a9;"></div>
<div class="r" style="left:30px;top:350px;width:1352px;height:1px;background:#a9a9a9;"></div>
<div class="r" style="left:30px;top:366px;width:1352px;height:1px;background:#a9a9a9;"></div>
<div class="r" style="left:30px;top:382px;width:1352px;height:1px;background:#a9a9a9;"></div>
<div class="r" style="left:30px;top:398px;width:1352px;height:1px;background:#a9a9a9;"></div>
<div class="r" style="left:30px;top:414px;width:1352px;height:1px;background:#a9a9a9;"></div>
<div class="r" style="left:30px;top:430px;width:1352px;height:1px;background:#a9a9a9;"></div>
<div class="r" style="left:30px;top:446px;width:1352px;height:1px;background:#a9a9a9;"></div>
<div class="r" style="left:30px;top:462px;width:1352px;height:1px;background:#a9a9a9;"></div>
<div class="r" style="left:30px;top:478px;width:1352px;height:1px;background:#a9a9a9;"></div>
<div class="r" style="left:30px;top:494px;width:1352px;height:1px;background:#a9a9a9;"></div>
<div class="r" style="left:30px;top:510px;width:1352px;height:1px;background:#a9a9a9;"></div>
<div class="r" style="left:30px;top:526px;width:1352px;height:1px;background:#a9a9a9;"></div>
<div class="r" style="left:30px;top:542px;width:1352px;height:1px;background:#a9a9a9;"></div>
<div class="r" style="left:30px;top:558px;width:1352px;height:1px;background:#a9a9a9;"></div>
<div class="r" style="left:30px;top:574px;width:1352px;height:1px;background:#a9a9a9;"></div>
<div class="r" style="left:30px;top:590px;width:1352px;height:1px;background:#a9a9a9;"></div>
<div class="r" style="left:30px;top:606px;width:1352px;height:1px;background:#a9a9a9;"></div>
<div class="r" style="left:30px;top:622px;width:1352px;height:1px;background:#a9a9a9;"></div>
<div class="r" style="left:30px;top:638px;width:1352px;height:1px;background:#a9a9a9;"></div>
<div class="r" style="left:30px;top:654px;width:1352px;height:1px;background:#a9a9a9;"></div>
<div class="r" style="left:30px;top:670px;width:1352px;height:1px;background:#a9a9a9;"></div>
<div class="r" style="left:30px;top:686px;width:1352px;height:1px;background:#a9a9a9;"></div>
<div class="r" style="left:30px;top:702px;width:1352px;height:1px;background:#a9a9a9;"></div>
<div class="r" style="left:30px;top:718px;width:1352px;height:1px;background:#a9a9a9;"></div>
<div class="r" style="left:30px;top:734px;width:1352px;height:1px;background:#a9a9a9;"></div>
<div class="r" style="left:30px;top:750px;width:1352px;height:1px;background:#a9a9a9;"></div>
<div class="r" style="left:30px;top:766px;width:1352px;height:1px;background:#a9a9a9;"></div>
<div class="r" style="left:30px;top:782px;width:1352px;height:1px;background:#a9a9a9;"></div>
<div class="r" style="left:30px;top:798px;width:1352px;height:1px;background:#a9a9a9;"></div>
<div class="r" style="left:30px;top:814px;width:1352px;height:1px;background:#a9a9a9;"></div>
<div class="r" style="left:30px;top:830px;width:1352px;height:1px;background:#a9a9a9;"></div>
<div class="r" style="left:30px;top:846px;width:1352px;height:1px;background:#a9a9a9;"></div>
<div class="r" style="left:30px;top:862px;width:1352px;height:1px;background:#a9a9a9;"></div>
<div class="r" style="left:196px;top:175px;width:1px;height:692px;background:#a9a9a9;"></div>
<div class="r" style="left:363px;top:175px;width:1px;height:692px;background:#a9a9a9;"></div>
<div class="r" style="left:530px;top:175px;width:1px;height:692px;background:#a9a9a9;"></div>
<div class="r" style="left:678px;top:175px;width:1px;height:692px;background:#a9a9a9;"></div>
<div class="r" style="left:764px;top:175px;width:1px;height:692px;background:#a9a9a9;"></div>
<div class="r" style="left:896px;top:175px;width:1px;height:692px;background:#a9a9a9;"></div>
<div class="r" style="left:1000px;top:175px;width:1px;height:692px;background:#a9a9a9;"></div>
<div class="r" style="left:1103px;top:175px;width:1px;height:692px;background:#a9a9a9;"></div>
<div class="r" style="left:1207px;top:175px;width:1px;height:692px;background:#a9a9a9;"></div>
<div class="r" style="left:1269px;top:175px;width:1px;height:692px;background:#a9a9a9;"></div>
<div class="r" style="left:1348px;top:175px;width:1px;height:692px;background:#a9a9a9;"></div>
<div class="r" style="left:531px;top:175px;width:148px;height:692px;background:#d34b2a;"></div>
<div class="r" style="left:679px;top:175px;width:591px;height:692px;background:#ff3b24;"></div>
<div class="r" style="left:1270px;top:206px;width:112px;height:16px;background:#ffff00;"></div>
<div class="r" style="left:678px;top:191px;width:1px;height:676px;background:#70994a;"></div>
<div class="r" style="left:530px;top:175px;width:1px;height:692px;background:#70994a;"></div>
<div class="r" style="left:0px;top:158px;width:1382px;height:16px;background:#cccccc;"></div>
<div class="r" style="left:0px;top:174px;width:1382px;height:1px;background:#1a1a1a;"></div>
<div class="r" style="left:0px;top:157px;width:1382px;height:1px;background:#5f675f;"></div>
<div class="r" style="left:0px;top:156px;width:1382px;height:1px;background:#a2a6a2;"></div>
<div class="r" style="left:29px;top:158px;width:1px;height:17px;background:#1a1a1a;"></div>
<span class="t k" style="left:109.55px;top:158.48px;font:400 13.33px/17px 'Liberation Sans', sans-serif;color:#1a1a1a;-webkit-text-stroke:.5px #1a1a1a;">A</span>
<div class="r" style="left:196px;top:158px;width:1px;height:17px;background:#1a1a1a;"></div>
<span class="t k" style="left:276.55px;top:158.48px;font:400 13.33px/17px 'Liberation Sans', sans-serif;color:#1a1a1a;-webkit-text-stroke:.5px #1a1a1a;">B</span>
<div class="r" style="left:363px;top:158px;width:1px;height:17px;background:#1a1a1a;"></div>
<span class="t k" style="left:443.19px;top:158.48px;font:400 13.33px/17px 'Liberation Sans', sans-serif;color:#1a1a1a;-webkit-text-stroke:.5px #1a1a1a;">C</span>
<div class="r" style="left:530px;top:158px;width:1px;height:17px;background:#1a1a1a;"></div>
<div class="r" style="left:531px;top:158px;width:147px;height:16px;background:#70994a;"></div>
<span class="t kb" style="left:600.69px;top:158.48px;font:700 13.33px/17px 'Liberation Sans', sans-serif;color:#fff;">D</span>
<div class="r" style="left:678px;top:158px;width:1px;height:17px;background:#1a1a1a;"></div>
<span class="t k" style="left:718.05px;top:158.48px;font:400 13.33px/17px 'Liberation Sans', sans-serif;color:#1a1a1a;-webkit-text-stroke:.5px #1a1a1a;">E</span>
<div class="r" style="left:764px;top:158px;width:1px;height:17px;background:#1a1a1a;"></div>
<span class="t k" style="left:827.43px;top:158.48px;font:400 13.33px/17px 'Liberation Sans', sans-serif;color:#1a1a1a;-webkit-text-stroke:.5px #1a1a1a;">F</span>
<div class="r" style="left:896px;top:158px;width:1px;height:17px;background:#1a1a1a;"></div>
<span class="t k" style="left:944.32px;top:158.48px;font:400 13.33px/17px 'Liberation Sans', sans-serif;color:#1a1a1a;-webkit-text-stroke:.5px #1a1a1a;">G</span>
<div class="r" style="left:1000px;top:158px;width:1px;height:17px;background:#1a1a1a;"></div>
<span class="t k" style="left:1048.19px;top:158.48px;font:400 13.33px/17px 'Liberation Sans', sans-serif;color:#1a1a1a;-webkit-text-stroke:.5px #1a1a1a;">H</span>
<div class="r" style="left:1103px;top:158px;width:1px;height:17px;background:#1a1a1a;"></div>
<span class="t k" style="left:1154.65px;top:158.48px;font:400 13.33px/17px 'Liberation Sans', sans-serif;color:#1a1a1a;-webkit-text-stroke:.5px #1a1a1a;">I</span>
<div class="r" style="left:1207px;top:158px;width:1px;height:17px;background:#1a1a1a;"></div>
<span class="t k" style="left:1236.17px;top:158.48px;font:400 13.33px/17px 'Liberation Sans', sans-serif;color:#1a1a1a;-webkit-text-stroke:.5px #1a1a1a;">J</span>
<div class="r" style="left:1269px;top:158px;width:1px;height:17px;background:#1a1a1a;"></div>
<span class="t k" style="left:1305.55px;top:158.48px;font:400 13.33px/17px 'Liberation Sans', sans-serif;color:#1a1a1a;-webkit-text-stroke:.5px #1a1a1a;">K</span>
<div class="r" style="left:1348px;top:158px;width:1px;height:17px;background:#1a1a1a;"></div>
<div class="r" style="left:0px;top:175px;width:29px;height:692px;background:#70994a;"></div>
<div class="r" style="left:29px;top:175px;width:1px;height:692px;background:#555c50;"></div>
<span class="t kb" style="left:10.29px;top:174.88px;font:700 13.33px/17px 'Liberation Sans', sans-serif;color:#fff;">1</span>
<div class="r" style="left:0px;top:190px;width:29px;height:1px;background:transparent;height:1px;background:repeating-linear-gradient(90deg,#55624a 0,#55624a 1px,transparent 1px,transparent 2px)"></div>
<span class="t kb" style="left:10.29px;top:190.88px;font:700 13.33px/17px 'Liberation Sans', sans-serif;color:#fff;">2</span>
<div class="r" style="left:0px;top:206px;width:29px;height:1px;background:transparent;height:1px;background:repeating-linear-gradient(90deg,#55624a 0,#55624a 1px,transparent 1px,transparent 2px)"></div>
<span class="t kb" style="left:10.29px;top:206.88px;font:700 13.33px/17px 'Liberation Sans', sans-serif;color:#fff;">3</span>
<div class="r" style="left:0px;top:222px;width:29px;height:1px;background:transparent;height:1px;background:repeating-linear-gradient(90deg,#55624a 0,#55624a 1px,transparent 1px,transparent 2px)"></div>
<span class="t kb" style="left:10.29px;top:222.88px;font:700 13.33px/17px 'Liberation Sans', sans-serif;color:#fff;">4</span>
<div class="r" style="left:0px;top:238px;width:29px;height:1px;background:transparent;height:1px;background:repeating-linear-gradient(90deg,#55624a 0,#55624a 1px,transparent 1px,transparent 2px)"></div>
<span class="t kb" style="left:10.29px;top:238.88px;font:700 13.33px/17px 'Liberation Sans', sans-serif;color:#fff;">5</span>
<div class="r" style="left:0px;top:254px;width:29px;height:1px;background:transparent;height:1px;background:repeating-linear-gradient(90deg,#55624a 0,#55624a 1px,transparent 1px,transparent 2px)"></div>
<span class="t kb" style="left:10.29px;top:254.88px;font:700 13.33px/17px 'Liberation Sans', sans-serif;color:#fff;">6</span>
<div class="r" style="left:0px;top:270px;width:29px;height:1px;background:transparent;height:1px;background:repeating-linear-gradient(90deg,#55624a 0,#55624a 1px,transparent 1px,transparent 2px)"></div>
<span class="t kb" style="left:10.29px;top:270.88px;font:700 13.33px/17px 'Liberation Sans', sans-serif;color:#fff;">7</span>
<div class="r" style="left:0px;top:286px;width:29px;height:1px;background:transparent;height:1px;background:repeating-linear-gradient(90deg,#55624a 0,#55624a 1px,transparent 1px,transparent 2px)"></div>
<span class="t kb" style="left:10.29px;top:286.88px;font:700 13.33px/17px 'Liberation Sans', sans-serif;color:#fff;">8</span>
<div class="r" style="left:0px;top:302px;width:29px;height:1px;background:transparent;height:1px;background:repeating-linear-gradient(90deg,#55624a 0,#55624a 1px,transparent 1px,transparent 2px)"></div>
<span class="t kb" style="left:10.29px;top:302.88px;font:700 13.33px/17px 'Liberation Sans', sans-serif;color:#fff;">9</span>
<div class="r" style="left:0px;top:318px;width:29px;height:1px;background:transparent;height:1px;background:repeating-linear-gradient(90deg,#55624a 0,#55624a 1px,transparent 1px,transparent 2px)"></div>
<span class="t kb" style="left:6.59px;top:318.88px;font:700 13.33px/17px 'Liberation Sans', sans-serif;color:#fff;">10</span>
<div class="r" style="left:0px;top:334px;width:29px;height:1px;background:transparent;height:1px;background:repeating-linear-gradient(90deg,#55624a 0,#55624a 1px,transparent 1px,transparent 2px)"></div>
<span class="t kb" style="left:6.95px;top:334.88px;font:700 13.33px/17px 'Liberation Sans', sans-serif;color:#fff;">11</span>
<div class="r" style="left:0px;top:350px;width:29px;height:1px;background:transparent;height:1px;background:repeating-linear-gradient(90deg,#55624a 0,#55624a 1px,transparent 1px,transparent 2px)"></div>
<span class="t kb" style="left:6.59px;top:350.88px;font:700 13.33px/17px 'Liberation Sans', sans-serif;color:#fff;">12</span>
<div class="r" style="left:0px;top:366px;width:29px;height:1px;background:transparent;height:1px;background:repeating-linear-gradient(90deg,#55624a 0,#55624a 1px,transparent 1px,transparent 2px)"></div>
<span class="t kb" style="left:6.59px;top:366.88px;font:700 13.33px/17px 'Liberation Sans', sans-serif;color:#fff;">13</span>
<div class="r" style="left:0px;top:382px;width:29px;height:1px;background:transparent;height:1px;background:repeating-linear-gradient(90deg,#55624a 0,#55624a 1px,transparent 1px,transparent 2px)"></div>
<span class="t kb" style="left:6.59px;top:382.88px;font:700 13.33px/17px 'Liberation Sans', sans-serif;color:#fff;">14</span>
<div class="r" style="left:0px;top:398px;width:29px;height:1px;background:transparent;height:1px;background:repeating-linear-gradient(90deg,#55624a 0,#55624a 1px,transparent 1px,transparent 2px)"></div>
<span class="t kb" style="left:6.59px;top:398.88px;font:700 13.33px/17px 'Liberation Sans', sans-serif;color:#fff;">15</span>
<div class="r" style="left:0px;top:414px;width:29px;height:1px;background:transparent;height:1px;background:repeating-linear-gradient(90deg,#55624a 0,#55624a 1px,transparent 1px,transparent 2px)"></div>
<span class="t kb" style="left:6.59px;top:414.88px;font:700 13.33px/17px 'Liberation Sans', sans-serif;color:#fff;">16</span>
<div class="r" style="left:0px;top:430px;width:29px;height:1px;background:transparent;height:1px;background:repeating-linear-gradient(90deg,#55624a 0,#55624a 1px,transparent 1px,transparent 2px)"></div>
<span class="t kb" style="left:6.59px;top:430.88px;font:700 13.33px/17px 'Liberation Sans', sans-serif;color:#fff;">17</span>
<div class="r" style="left:0px;top:446px;width:29px;height:1px;background:transparent;height:1px;background:repeating-linear-gradient(90deg,#55624a 0,#55624a 1px,transparent 1px,transparent 2px)"></div>
<span class="t kb" style="left:6.59px;top:446.88px;font:700 13.33px/17px 'Liberation Sans', sans-serif;color:#fff;">18</span>
<div class="r" style="left:0px;top:462px;width:29px;height:1px;background:transparent;height:1px;background:repeating-linear-gradient(90deg,#55624a 0,#55624a 1px,transparent 1px,transparent 2px)"></div>
<span class="t kb" style="left:6.59px;top:462.88px;font:700 13.33px/17px 'Liberation Sans', sans-serif;color:#fff;">19</span>
<div class="r" style="left:0px;top:478px;width:29px;height:1px;background:transparent;height:1px;background:repeating-linear-gradient(90deg,#55624a 0,#55624a 1px,transparent 1px,transparent 2px)"></div>
<span class="t kb" style="left:6.59px;top:478.88px;font:700 13.33px/17px 'Liberation Sans', sans-serif;color:#fff;">20</span>
<div class="r" style="left:0px;top:494px;width:29px;height:1px;background:transparent;height:1px;background:repeating-linear-gradient(90deg,#55624a 0,#55624a 1px,transparent 1px,transparent 2px)"></div>
<span class="t kb" style="left:6.59px;top:494.88px;font:700 13.33px/17px 'Liberation Sans', sans-serif;color:#fff;">21</span>
<div class="r" style="left:0px;top:510px;width:29px;height:1px;background:transparent;height:1px;background:repeating-linear-gradient(90deg,#55624a 0,#55624a 1px,transparent 1px,transparent 2px)"></div>
<span class="t kb" style="left:6.59px;top:510.88px;font:700 13.33px/17px 'Liberation Sans', sans-serif;color:#fff;">22</span>
<div class="r" style="left:0px;top:526px;width:29px;height:1px;background:transparent;height:1px;background:repeating-linear-gradient(90deg,#55624a 0,#55624a 1px,transparent 1px,transparent 2px)"></div>
<span class="t kb" style="left:6.59px;top:526.88px;font:700 13.33px/17px 'Liberation Sans', sans-serif;color:#fff;">23</span>
<div class="r" style="left:0px;top:542px;width:29px;height:1px;background:transparent;height:1px;background:repeating-linear-gradient(90deg,#55624a 0,#55624a 1px,transparent 1px,transparent 2px)"></div>
<span class="t kb" style="left:6.59px;top:542.88px;font:700 13.33px/17px 'Liberation Sans', sans-serif;color:#fff;">24</span>
<div class="r" style="left:0px;top:558px;width:29px;height:1px;background:transparent;height:1px;background:repeating-linear-gradient(90deg,#55624a 0,#55624a 1px,transparent 1px,transparent 2px)"></div>
<span class="t kb" style="left:6.59px;top:558.88px;font:700 13.33px/17px 'Liberation Sans', sans-serif;color:#fff;">25</span>
<div class="r" style="left:0px;top:574px;width:29px;height:1px;background:transparent;height:1px;background:repeating-linear-gradient(90deg,#55624a 0,#55624a 1px,transparent 1px,transparent 2px)"></div>
<span class="t kb" style="left:6.59px;top:574.88px;font:700 13.33px/17px 'Liberation Sans', sans-serif;color:#fff;">26</span>
<div class="r" style="left:0px;top:590px;width:29px;height:1px;background:transparent;height:1px;background:repeating-linear-gradient(90deg,#55624a 0,#55624a 1px,transparent 1px,transparent 2px)"></div>
<span class="t kb" style="left:6.59px;top:590.88px;font:700 13.33px/17px 'Liberation Sans', sans-serif;color:#fff;">27</span>
<div class="r" style="left:0px;top:606px;width:29px;height:1px;background:transparent;height:1px;background:repeating-linear-gradient(90deg,#55624a 0,#55624a 1px,transparent 1px,transparent 2px)"></div>
<span class="t kb" style="left:6.59px;top:606.88px;font:700 13.33px/17px 'Liberation Sans', sans-serif;color:#fff;">28</span>
<div class="r" style="left:0px;top:622px;width:29px;height:1px;background:transparent;height:1px;background:repeating-linear-gradient(90deg,#55624a 0,#55624a 1px,transparent 1px,transparent 2px)"></div>
<span class="t kb" style="left:6.59px;top:622.88px;font:700 13.33px/17px 'Liberation Sans', sans-serif;color:#fff;">29</span>
<div class="r" style="left:0px;top:638px;width:29px;height:1px;background:transparent;height:1px;background:repeating-linear-gradient(90deg,#55624a 0,#55624a 1px,transparent 1px,transparent 2px)"></div>
<span class="t kb" style="left:6.59px;top:638.88px;font:700 13.33px/17px 'Liberation Sans', sans-serif;color:#fff;">30</span>
<div class="r" style="left:0px;top:654px;width:29px;height:1px;background:transparent;height:1px;background:repeating-linear-gradient(90deg,#55624a 0,#55624a 1px,transparent 1px,transparent 2px)"></div>
<span class="t kb" style="left:6.59px;top:654.88px;font:700 13.33px/17px 'Liberation Sans', sans-serif;color:#fff;">31</span>
<div class="r" style="left:0px;top:670px;width:29px;height:1px;background:transparent;height:1px;background:repeating-linear-gradient(90deg,#55624a 0,#55624a 1px,transparent 1px,transparent 2px)"></div>
<span class="t kb" style="left:6.59px;top:670.88px;font:700 13.33px/17px 'Liberation Sans', sans-serif;color:#fff;">32</span>
<div class="r" style="left:0px;top:686px;width:29px;height:1px;background:transparent;height:1px;background:repeating-linear-gradient(90deg,#55624a 0,#55624a 1px,transparent 1px,transparent 2px)"></div>
<span class="t kb" style="left:6.59px;top:686.88px;font:700 13.33px/17px 'Liberation Sans', sans-serif;color:#fff;">33</span>
<div class="r" style="left:0px;top:702px;width:29px;height:1px;background:transparent;height:1px;background:repeating-linear-gradient(90deg,#55624a 0,#55624a 1px,transparent 1px,transparent 2px)"></div>
<span class="t kb" style="left:6.59px;top:702.88px;font:700 13.33px/17px 'Liberation Sans', sans-serif;color:#fff;">34</span>
<div class="r" style="left:0px;top:718px;width:29px;height:1px;background:transparent;height:1px;background:repeating-linear-gradient(90deg,#55624a 0,#55624a 1px,transparent 1px,transparent 2px)"></div>
<span class="t kb" style="left:6.59px;top:718.88px;font:700 13.33px/17px 'Liberation Sans', sans-serif;color:#fff;">35</span>
<div class="r" style="left:0px;top:734px;width:29px;height:1px;background:transparent;height:1px;background:repeating-linear-gradient(90deg,#55624a 0,#55624a 1px,transparent 1px,transparent 2px)"></div>
<span class="t kb" style="left:6.59px;top:734.88px;font:700 13.33px/17px 'Liberation Sans', sans-serif;color:#fff;">36</span>
<div class="r" style="left:0px;top:750px;width:29px;height:1px;background:transparent;height:1px;background:repeating-linear-gradient(90deg,#55624a 0,#55624a 1px,transparent 1px,transparent 2px)"></div>
<span class="t kb" style="left:6.59px;top:750.88px;font:700 13.33px/17px 'Liberation Sans', sans-serif;color:#fff;">37</span>
<div class="r" style="left:0px;top:766px;width:29px;height:1px;background:transparent;height:1px;background:repeating-linear-gradient(90deg,#55624a 0,#55624a 1px,transparent 1px,transparent 2px)"></div>
<span class="t kb" style="left:6.59px;top:766.88px;font:700 13.33px/17px 'Liberation Sans', sans-serif;color:#fff;">38</span>
<div class="r" style="left:0px;top:782px;width:29px;height:1px;background:transparent;height:1px;background:repeating-linear-gradient(90deg,#55624a 0,#55624a 1px,transparent 1px,transparent 2px)"></div>
<span class="t kb" style="left:6.59px;top:782.88px;font:700 13.33px/17px 'Liberation Sans', sans-serif;color:#fff;">39</span>
<div class="r" style="left:0px;top:798px;width:29px;height:1px;background:transparent;height:1px;background:repeating-linear-gradient(90deg,#55624a 0,#55624a 1px,transparent 1px,transparent 2px)"></div>
<span class="t kb" style="left:6.59px;top:798.88px;font:700 13.33px/17px 'Liberation Sans', sans-serif;color:#fff;">40</span>
<div class="r" style="left:0px;top:814px;width:29px;height:1px;background:transparent;height:1px;background:repeating-linear-gradient(90deg,#55624a 0,#55624a 1px,transparent 1px,transparent 2px)"></div>
<span class="t kb" style="left:6.59px;top:814.88px;font:700 13.33px/17px 'Liberation Sans', sans-serif;color:#fff;">41</span>
<div class="r" style="left:0px;top:830px;width:29px;height:1px;background:transparent;height:1px;background:repeating-linear-gradient(90deg,#55624a 0,#55624a 1px,transparent 1px,transparent 2px)"></div>
<span class="t kb" style="left:6.59px;top:830.88px;font:700 13.33px/17px 'Liberation Sans', sans-serif;color:#fff;">42</span>
<div class="r" style="left:0px;top:846px;width:29px;height:1px;background:transparent;height:1px;background:repeating-linear-gradient(90deg,#55624a 0,#55624a 1px,transparent 1px,transparent 2px)"></div>
<span class="t kb" style="left:6.59px;top:846.88px;font:700 13.33px/17px 'Liberation Sans', sans-serif;color:#fff;">43</span>
<div class="r" style="left:0px;top:862px;width:29px;height:1px;background:transparent;height:1px;background:repeating-linear-gradient(90deg,#55624a 0,#55624a 1px,transparent 1px,transparent 2px)"></div>
<span class="t" style="left:137.95px;top:192.81px;font:400 10.667px/14px 'DejaVu Sans', sans-serif;color:#111;letter-spacing:0.200px;">Fehler:502</span>
<span class="t" style="left:137.95px;top:208.81px;font:400 10.667px/14px 'DejaVu Sans', sans-serif;color:#111;letter-spacing:0.200px;">Fehler:502</span>
<span class="t" style="left:137.95px;top:224.81px;font:400 10.667px/14px 'DejaVu Sans', sans-serif;color:#111;letter-spacing:0.200px;">Fehler:502</span>
<span class="t" style="left:137.95px;top:240.81px;font:400 10.667px/14px 'DejaVu Sans', sans-serif;color:#111;letter-spacing:0.200px;">Fehler:502</span>
<span class="t" style="left:137.95px;top:256.81px;font:400 10.667px/14px 'DejaVu Sans', sans-serif;color:#111;letter-spacing:0.200px;">Fehler:502</span>
<span class="t" style="left:137.95px;top:272.81px;font:400 10.667px/14px 'DejaVu Sans', sans-serif;color:#111;letter-spacing:0.200px;">Fehler:502</span>
<span class="t" style="left:137.95px;top:288.81px;font:400 10.667px/14px 'DejaVu Sans', sans-serif;color:#111;letter-spacing:0.200px;">Fehler:502</span>
<span class="t" style="left:137.95px;top:304.81px;font:400 10.667px/14px 'DejaVu Sans', sans-serif;color:#111;letter-spacing:0.200px;">Fehler:502</span>
<span class="t" style="left:197.60px;top:224.81px;font:400 10.667px/14px 'DejaVu Sans', sans-serif;color:#111;letter-spacing:0.138px;">43013,5902777778</span>
<span class="t" style="left:197.60px;top:240.81px;font:400 10.667px/14px 'DejaVu Sans', sans-serif;color:#111;letter-spacing:0.096px;">Oct. 05, 2017, 02:10 PM</span>
<span class="t" style="left:471.95px;top:208.81px;font:400 10.667px/14px 'DejaVu Sans', sans-serif;color:#111;letter-spacing:0.200px;">Fehler:508</span>
<span class="t" style="left:471.95px;top:272.81px;font:400 10.667px/14px 'DejaVu Sans', sans-serif;color:#111;letter-spacing:0.200px;">Fehler:502</span>
<span class="t" style="left:471.95px;top:304.81px;font:400 10.667px/14px 'DejaVu Sans', sans-serif;color:#111;letter-spacing:0.200px;">Fehler:508</span>
<span class="t" style="left:399.22px;top:224.81px;font:400 10.667px/14px 'DejaVu Sans', sans-serif;color:#111;letter-spacing:0.087px;">Oct. 05, 2017, 02:10 PM</span>
<span class="t" style="left:364.60px;top:240.81px;font:400 10.667px/14px 'DejaVu Sans', sans-serif;color:#111;letter-spacing:0.096px;">Oct. 05, 2017, 02:10 PM</span>
<span class="t" style="left:532.20px;top:176.81px;font:400 10.667px/14px 'DejaVu Sans', sans-serif;color:#111;letter-spacing:-0.374px;">Datetime</span>
<svg style="left:0;top:0" width="1382" height="867"><path d="M534.0 189.0q1.500 -3.200 3 0q1.500 3.200 3 0q1.500 -3.200 3 0q1.500 3.200 3 0q1.500 -3.200 3 0q1.500 3.200 3 0q1.500 -3.200 3 0q1.500 3.200 3 0q1.500 -3.200 3 0q1.500 3.200 3 0q1.500 -3.200 3 0q1.500 3.200 3 0q1.500 -3.200 3 0q1.500 3.200 3 0" stroke="#f01008" stroke-width="1.200" fill="none"/></svg>
<span class="t" style="left:547.22px;top:192.81px;font:400 10.667px/14px 'DejaVu Sans', sans-serif;color:#111;letter-spacing:0.087px;">Oct. 04, 2017, 03:15 PM</span>
<span class="t" style="left:547.22px;top:208.81px;font:400 10.667px/14px 'DejaVu Sans', sans-serif;color:#111;letter-spacing:0.087px;">Oct. 05, 2017, 02:10 PM</span>
<span class="t" style="left:547.22px;top:224.81px;font:400 10.667px/14px 'DejaVu Sans', sans-serif;color:#111;letter-spacing:0.087px;">Oct. 05, 2017, 02:10 PM</span>
<span class="t" style="left:532.20px;top:240.81px;font:400 10.667px/14px 'DejaVu Sans', sans-serif;color:#111;letter-spacing:0.096px;">Oct. 05, 2017, 02:10 PM</span>
<span class="t" style="left:532.20px;top:256.81px;font:400 10.667px/14px 'DejaVu Sans', sans-serif;color:#111;letter-spacing:0.096px;">Oct. 05, 2017, 03:52 PM</span>
<span class="t" style="left:532.20px;top:272.81px;font:400 10.667px/14px 'DejaVu Sans', sans-serif;color:#111;letter-spacing:0.096px;">Oct. 06, 2017, 06:40 AM</span>
<span class="t" style="left:532.20px;top:288.81px;font:400 10.667px/14px 'DejaVu Sans', sans-serif;color:#111;letter-spacing:0.096px;">Oct. 06, 2017, 07:32 AM</span>
<span class="t" style="left:532.20px;top:304.81px;font:400 10.667px/14px 'DejaVu Sans', sans-serif;color:#111;letter-spacing:0.096px;">Oct. 06, 2017, 07:32 AM</span>
<span class="t" style="left:532.20px;top:320.81px;font:400 10.667px/14px 'DejaVu Sans', sans-serif;color:#111;letter-spacing:0.096px;">Oct. 06, 2017, 07:33 AM</span>
<span class="t" style="left:532.20px;top:336.81px;font:400 10.667px/14px 'DejaVu Sans', sans-serif;color:#111;letter-spacing:0.096px;">Oct. 06, 2017, 07:36 AM</span>
<span class="t" style="left:532.20px;top:352.81px;font:400 10.667px/14px 'DejaVu Sans', sans-serif;color:#111;letter-spacing:0.096px;">Oct. 06, 2017, 07:38 AM</span>
<span class="t" style="left:532.20px;top:368.81px;font:400 10.667px/14px 'DejaVu Sans', sans-serif;color:#111;letter-spacing:0.000px;">Oct. 0</span>
<span class="t" style="left:532.20px;top:384.81px;font:400 10.667px/14px 'DejaVu Sans', sans-serif;color:#111;letter-spacing:0.000px;">Oct. 0</span>
<span class="t" style="left:532.20px;top:400.81px;font:400 10.667px/14px 'DejaVu Sans', sans-serif;color:#111;letter-spacing:0.000px;">Oct. 0</span>
<span class="t" style="left:532.20px;top:416.81px;font:400 10.667px/14px 'DejaVu Sans', sans-serif;color:#111;letter-spacing:0.000px;">Oct. 0</span>
<span class="t" style="left:532.20px;top:432.81px;font:400 10.667px/14px 'DejaVu Sans', sans-serif;color:#111;letter-spacing:0.000px;">Oct. 0</span>
<span class="t" style="left:532.20px;top:448.81px;font:400 10.667px/14px 'DejaVu Sans', sans-serif;color:#111;letter-spacing:0.000px;">Oct. 0</span>
<span class="t" style="left:532.20px;top:464.81px;font:400 10.667px/14px 'DejaVu Sans', sans-serif;color:#111;letter-spacing:0.000px;">Oct. 0</span>
<span class="t" style="left:532.20px;top:480.81px;font:400 10.667px/14px 'DejaVu Sans', sans-serif;color:#111;letter-spacing:0.000px;">Oct. 0</span>
<span class="t" style="left:532.20px;top:496.81px;font:400 10.667px/14px 'DejaVu Sans', sans-serif;color:#111;letter-spacing:0.000px;">Oct. 0</span>
<span class="t" style="left:532.20px;top:512.81px;font:400 10.667px/14px 'DejaVu Sans', sans-serif;color:#111;letter-spacing:0.000px;">Oct. 0</span>
<span class="t" style="left:532.20px;top:528.81px;font:400 10.667px/14px 'DejaVu Sans', sans-serif;color:#111;letter-spacing:0.000px;">Oct. 0</span>
<span class="t" style="left:532.20px;top:544.81px;font:400 10.667px/14px 'DejaVu Sans', sans-serif;color:#111;letter-spacing:0.000px;">Oct. 0</span>
<span class="t" style="left:532.20px;top:560.81px;font:400 10.667px/14px 'DejaVu Sans', sans-serif;color:#111;letter-spacing:0.000px;">Oct. 0</span>
<span class="t" style="left:532.20px;top:576.81px;font:400 10.667px/14px 'DejaVu Sans', sans-serif;color:#111;letter-spacing:0.000px;">Oct. 0</span>
<span class="t" style="left:532.20px;top:592.81px;font:400 10.667px/14px 'DejaVu Sans', sans-serif;color:#111;letter-spacing:0.000px;">Oct. 0</span>
<span class="t" style="left:532.20px;top:608.81px;font:400 10.667px/14px 'DejaVu Sans', sans-serif;color:#111;letter-spacing:0.000px;">Oct. 0</span>
<span class="t" style="left:532.20px;top:624.81px;font:400 10.667px/14px 'DejaVu Sans', sans-serif;color:#111;letter-spacing:0.000px;">Oct. 0</span>
<span class="t" style="left:532.20px;top:640.81px;font:400 10.667px/14px 'DejaVu Sans', sans-serif;color:#111;letter-spacing:0.000px;">Oct. 0</span>
<span class="t" style="left:532.20px;top:656.81px;font:400 10.667px/14px 'DejaVu Sans', sans-serif;color:#111;letter-spacing:0.000px;">Oct. 0</span>
<span class="t" style="left:532.20px;top:672.81px;font:400 10.667px/14px 'DejaVu Sans', sans-serif;color:#111;letter-spacing:0.000px;">Oct. 0</span>
<span class="t" style="left:532.20px;top:688.81px;font:400 10.667px/14px 'DejaVu Sans', sans-serif;color:#111;letter-spacing:0.000px;">Oct. 0</span>
<span class="t" style="left:532.20px;top:704.81px;font:400 10.667px/14px 'DejaVu Sans', sans-serif;color:#111;letter-spacing:0.000px;">Oct. 0</span>
<span class="t" style="left:532.20px;top:720.81px;font:400 10.667px/14px 'DejaVu Sans', sans-serif;color:#111;letter-spacing:0.000px;">Oct. 0</span>
<span class="t" style="left:532.20px;top:736.81px;font:400 10.667px/14px 'DejaVu Sans', sans-serif;color:#111;letter-spacing:0.000px;">Oct. 0</span>
<span class="t" style="left:532.20px;top:752.81px;font:400 10.667px/14px 'DejaVu Sans', sans-serif;color:#111;letter-spacing:0.000px;">Oct. 0</span>
<span class="t" style="left:532.20px;top:768.81px;font:400 10.667px/14px 'DejaVu Sans', sans-serif;color:#111;letter-spacing:0.000px;">Oct. 0</span>
<span class="t" style="left:532.20px;top:784.81px;font:400 10.667px/14px 'DejaVu Sans', sans-serif;color:#111;letter-spacing:0.000px;">Oct. 0</span>
<span class="t" style="left:532.20px;top:800.81px;font:400 10.667px/14px 'DejaVu Sans', sans-serif;color:#111;letter-spacing:0.000px;">Oct. 0</span>
<span class="t" style="left:532.20px;top:816.81px;font:400 10.667px/14px 'DejaVu Sans', sans-serif;color:#111;letter-spacing:0.000px;">Oct. 0</span>
<span class="t" style="left:532.20px;top:832.81px;font:400 10.667px/14px 'DejaVu Sans', sans-serif;color:#111;letter-spacing:0.000px;">Oct. 0</span>
<span class="t" style="left:532.20px;top:848.81px;font:400 10.667px/14px 'DejaVu Sans', sans-serif;color:#111;letter-spacing:0.096px;">Oct. 18, 2017, 03:56 PM</span>
<svg style="left:0;top:0" width="1382" height="867"><path d="M365.5 253.0q1.500 -3.200 3 0q1.500 3.200 3 0q1.500 -3.200 3 0q1.500 3.200 3 0q1.500 -3.200 3 0q1.500 3.200 3 0q1.500 -3.200 3 0" stroke="#f01008" stroke-width="1.200" fill="none"/></svg>
<svg style="left:0;top:0" width="1382" height="867"><path d="M477.5 253.0q1.500 -3.200 3 0q1.500 3.200 3 0q1.500 -3.200 3 0q1.500 3.200 3 0q1.500 -3.200 3 0q1.500 3.200 3 0" stroke="#f01008" stroke-width="1.200" fill="none"/></svg>
<svg style="left:0;top:0" width="1382" height="867"><path d="M532.5 253.0q1.500 -3.200 3 0q1.500 3.200 3 0q1.500 -3.200 3 0q1.500 3.200 3 0q1.500 -3.200 3 0q1.500 3.200 3 0q1.500 -3.200 3 0" stroke="#f01008" stroke-width="1.200" fill="none"/></svg>
<svg style="left:0;top:0" width="1382" height="867"><path d="M644.5 253.0q1.500 -3.200 3 0q1.500 3.200 3 0q1.500 -3.200 3 0q1.500 3.200 3 0q1.500 -3.200 3 0q1.500 3.200 3 0" stroke="#f01008" stroke-width="1.200" fill="none"/></svg>
<svg style="left:0;top:0" width="1382" height="867"><path d="M532.5 269.0q1.500 -3.200 3 0q1.500 3.200 3 0q1.500 -3.200 3 0q1.500 3.200 3 0q1.500 -3.200 3 0q1.500 3.200 3 0q1.500 -3.200 3 0" stroke="#f01008" stroke-width="1.200" fill="none"/></svg>
<svg style="left:0;top:0" width="1382" height="867"><path d="M644.5 269.0q1.500 -3.200 3 0q1.500 3.200 3 0q1.500 -3.200 3 0q1.500 3.200 3 0q1.500 -3.200 3 0q1.500 3.200 3 0" stroke="#f01008" stroke-width="1.200" fill="none"/></svg>
<svg style="left:0;top:0" width="1382" height="867"><path d="M532.5 285.0q1.500 -3.200 3 0q1.500 3.200 3 0q1.500 -3.200 3 0q1.500 3.200 3 0q1.500 -3.200 3 0q1.500 3.200 3 0q1.500 -3.200 3 0" stroke="#f01008" stroke-width="1.200" fill="none"/></svg>
<svg style="left:0;top:0" width="1382" height="867"><path d="M532.5 301.0q1.500 -3.200 3 0q1.500 3.200 3 0q1.500 -3.200 3 0q1.500 3.200 3 0q1.500 -3.200 3 0q1.500 3.200 3 0q1.500 -3.200 3 0" stroke="#f01008" stroke-width="1.200" fill="none"/></svg>
<svg style="left:0;top:0" width="1382" height="867"><path d="M532.5 317.0q1.500 -3.200 3 0q1.500 3.200 3 0q1.500 -3.200 3 0q1.500 3.200 3 0q1.500 -3.200 3 0q1.500 3.200 3 0q1.500 -3.200 3 0" stroke="#f01008" stroke-width="1.200" fill="none"/></svg>
<svg style="left:0;top:0" width="1382" height="867"><path d="M532.5 333.0q1.500 -3.200 3 0q1.500 3.200 3 0q1.500 -3.200 3 0q1.500 3.200 3 0q1.500 -3.200 3 0q1.500 3.200 3 0q1.500 -3.200 3 0" stroke="#f01008" stroke-width="1.200" fill="none"/></svg>
<svg style="left:0;top:0" width="1382" height="867"><path d="M532.5 349.0q1.500 -3.200 3 0q1.500 3.200 3 0q1.500 -3.200 3 0q1.500 3.200 3 0q1.500 -3.200 3 0q1.500 3.200 3 0q1.500 -3.200 3 0" stroke="#f01008" stroke-width="1.200" fill="none"/></svg>
<svg style="left:0;top:0" width="1382" height="867"><path d="M532.5 365.0q1.500 -3.200 3 0q1.500 3.200 3 0q1.500 -3.200 3 0q1.500 3.200 3 0q1.500 -3.200 3 0q1.500 3.200 3 0q1.500 -3.200 3 0" stroke="#f01008" stroke-width="1.200" fill="none"/></svg>
<div class="r" style="left:530px;top:175px;width:149px;height:16px;background:transparent;border:2px solid #0a0a0a;border-top-width:1px"></div>
<div class="r" style="left:543px;top:360px;width:829px;height:493px;background:linear-gradient(#eeeeee 0,#dcdcdc 6px,#cccccc 20px);border:1px solid #6a6a6a;border-radius:6px 6px 0 0;box-shadow:0 3px 4px 8px rgba(0,0,0,.35),0 4px 5px 11px rgba(0,0,0,.15)"></div>
<span class="t k" style="left:892.00px;top:365.28px;font:400 13.33px/17px 'Liberation Sans', sans-serif;color:#2c2c2c;letter-spacing:0.134px;-webkit-text-stroke:.55px #2c2c2c;">Suchen und Ersetzen</span>
<span class="t kb" style="left:1349.62px;top:362.80px;font:700 15px/20px 'Liberation Sans', sans-serif;color:#6a6a6a;">×</span>
<span class="t kb" style="left:568.00px;top:402.88px;font:700 13.33px/17px 'Liberation Sans', sans-serif;color:#1a1a1a;letter-spacing:-0.369px;">Suchen:</span>
<span class="t kb" style="left:568.00px;top:488.38px;font:700 13.33px/17px 'Liberation Sans', sans-serif;color:#1a1a1a;letter-spacing:-0.001px;">Ersetzen:</span>
<div class="inp" style="left:640px;top:401px;width:713px;height:30px"></div>
<div class="r" style="left:1321px;top:401px;width:32px;height:30px;border:1px solid #7d7d7d;border-radius:0 3px 3px 0;background:linear-gradient(#fff 0,#fff 40%,#d6d6d6 100%)"></div>
<div class="inp" style="left:640px;top:487px;width:713px;height:30px"></div>
<div class="r" style="left:1321px;top:487px;width:32px;height:30px;border:1px solid #7d7d7d;border-radius:0 3px 3px 0;background:linear-gradient(#d8d8d8,#c0c0c0)"></div>
<svg style="left:1332.500px;top:414px" width="10" height="6"><path d="M0 0h9.600l-4.800 5.400z" fill="#1a1a1a"/></svg>
<svg style="left:1332.500px;top:500px" width="10" height="6"><path d="M0 0h9.600l-4.800 5.400z" fill="#6a6a6a"/></svg>
<span class="t k" style="left:646.00px;top:406.88px;font:400 13.33px/17px 'Liberation Sans', sans-serif;color:#1a1a1a;">.*</span>
<span class="t k" style="left:646.00px;top:493.38px;font:400 13.33px/17px 'Liberation Sans', sans-serif;color:#1a1a1a;">$0</span>
<div class="cb " style="left:640px;top:441px"></div>
<span class="t k" style="left:660.00px;top:438.58px;font:400 13.33px/17px 'Liberation Sans', sans-serif;color:#1a1a1a;letter-spacing:0.034px;">Groß- und Kleinschreibung beachten</span>
<div class="cb " style="left:896px;top:441px"></div>
<span class="t k" style="left:916.00px;top:438.58px;font:400 13.33px/17px 'Liberation Sans', sans-serif;color:#1a1a1a;letter-spacing:0.090px;">Formatierte Anzeige</span>
<div class="cb dis" style="left:1053px;top:441px"></div>
<span class="t k" style="left:1073.00px;top:438.58px;font:400 13.33px/17px 'Liberation Sans', sans-serif;color:#6f7f8f;letter-spacing:0.031px;">Nur ganze Zellen</span>
<div class="cb " style="left:1192px;top:441px"></div>
<span class="t k" style="left:1212.00px;top:438.58px;font:400 13.33px/17px 'Liberation Sans', sans-serif;color:#1a1a1a;letter-spacing:0.204px;">Alle Tabellen</span>
<div class="btn" style="left:566px;top:538px;width:147px;height:28px"></div>
<span class="t k" style="left:604.50px;top:543.38px;font:400 13.33px/17px 'Liberation Sans', sans-serif;color:#1a1a1a;letter-spacing:-0.104px;">Alle Suchen</span>
<div class="btn" style="left:725px;top:538px;width:147px;height:28px"></div>
<span class="t k" style="left:742.50px;top:543.38px;font:400 13.33px/17px 'Liberation Sans', sans-serif;color:#1a1a1a;letter-spacing:0.049px;">Vorherigen suchen</span>
<div class="btn" style="left:884px;top:538px;width:147px;height:28px"></div>
<span class="t k" style="left:906.50px;top:543.38px;font:400 13.33px/17px 'Liberation Sans', sans-serif;color:#1a1a1a;letter-spacing:-0.067px;">Nächsten suchen</span>
<div class="btn" style="left:1043px;top:538px;width:147px;height:28px"></div>
<span class="t k" style="left:1090.50px;top:543.38px;font:400 13.33px/17px 'Liberation Sans', sans-serif;color:#1a1a1a;letter-spacing:-0.076px;">Ersetzen</span>
<div class="btn" style="left:1202px;top:538px;width:147px;height:28px"></div>
<span class="t k" style="left:1236.50px;top:543.38px;font:400 13.33px/17px 'Liberation Sans', sans-serif;color:#1a1a1a;letter-spacing:0.072px;">Alle ersetzen</span>
<svg style="left:565px;top:588px" width="10" height="6"><path d="M0 0h10l-5 6z" fill="#1a1a1a"/></svg>
<span class="t kb" style="left:578.00px;top:582.88px;font:700 13.33px/17px 'Liberation Sans', sans-serif;color:#1a1a1a;letter-spacing:0.462px;">Weitere Optionen...</span>
<div class="cb on" style="left:574px;top:609px"></div>
<svg style="left:577px;top:612px" width="8" height="8"><path d="M1 1l6 6M7 1l-6 6" stroke="#fff" stroke-width="2.2"/></svg>
<span class="t k" style="left:594.00px;top:606.58px;font:400 13.33px/17px 'Liberation Sans', sans-serif;color:#1a1a1a;letter-spacing:0.221px;">Nur in Auswahl</span>
<div class="cb on" style="left:574px;top:637px"></div>
<svg style="left:577px;top:640px" width="8" height="8"><path d="M1 1l6 6M7 1l-6 6" stroke="#fff" stroke-width="2.2"/></svg>
<span class="t k" style="left:594.00px;top:634.58px;font:400 13.33px/17px 'Liberation Sans', sans-serif;color:#1a1a1a;letter-spacing:0.053px;">Reguläre Ausdrücke</span>
<div class="cb dis" style="left:574px;top:668px"></div>
<span class="t k" style="left:594.00px;top:665.58px;font:400 13.33px/17px 'Liberation Sans', sans-serif;color:#6f7f8f;letter-spacing:0.135px;">Ähnlichkeitssuche</span>
<div class="cb " style="left:574px;top:727px"></div>
<span class="t k" style="left:594.00px;top:724.58px;font:400 13.33px/17px 'Liberation Sans', sans-serif;color:#1a1a1a;letter-spacing:0.082px;">Diakritisch-sensitiv</span>
<div class="cb " style="left:973px;top:609px"></div>
<span class="t k" style="left:993.00px;top:606.58px;font:400 13.33px/17px 'Liberation Sans', sans-serif;color:#1a1a1a;letter-spacing:-0.114px;">Rückwärts ersetzen</span>
<div class="cb " style="left:973px;top:637px"></div>
<span class="t k" style="left:993.00px;top:634.58px;font:400 13.33px/17px 'Liberation Sans', sans-serif;color:#1a1a1a;letter-spacing:0.282px;">Zellvorlagen</span>
<div class="cb dis" style="left:973px;top:699px"></div>
<span class="t k" style="left:993.00px;top:696.58px;font:400 13.33px/17px 'Liberation Sans', sans-serif;color:#6f7f8f;letter-spacing:0.275px;">Platzhalter</span>
<div class="btn" style="left:831px;top:661px;width:130px;height:28px;background:linear-gradient(#cdcdcd 0,#cbcbcb 40%,#bcbcbc 100%);border-color:#828282"></div>
<span class="t k" style="left:848.00px;top:666.58px;font:400 13.33px/17px 'Liberation Sans', sans-serif;color:#5e696f;letter-spacing:0.350px;">Ähnlichkeiten...</span>
<span class="t k" style="left:578.00px;top:769.38px;font:400 13.33px/17px 'Liberation Sans', sans-serif;color:#1a1a1a;letter-spacing:0.076px;">Richtung:</span>
<div class="rb" style="left:651px;top:771px;background:#70994a;border-color:#4d6b32"></div><div class="r" style="left:655px;top:775px;width:6px;height:6px;border-radius:50%;background:#fff"></div>
<span class="t k" style="left:670.00px;top:768.88px;font:400 13.33px/17px 'Liberation Sans', sans-serif;color:#1a1a1a;letter-spacing:-0.051px;">Zeilen</span>
<div class="rb" style="left:727px;top:771px"></div>
<span class="t k" style="left:746.00px;top:768.88px;font:400 13.33px/17px 'Liberation Sans', sans-serif;color:#1a1a1a;letter-spacing:-0.030px;">Spalten</span>
<div class="btn" style="left:562px;top:806px;width:85px;height:28px"></div>
<span class="t k" style="left:590.00px;top:811.88px;font:400 13.33px/17px 'Liberation Sans', sans-serif;color:#1a1a1a;letter-spacing:0.467px;">Hilfe</span>
<div class="btn" style="left:1268px;top:806px;width:85px;height:28px"></div>
<span class="t k" style="left:1282.00px;top:811.88px;font:400 13.33px/17px 'Liberation Sans', sans-serif;color:#1a1a1a;letter-spacing:-0.253px;">Schließen</span>
<span class="t k" style="left:973.00px;top:769.38px;font:400 13.33px/17px 'Liberation Sans', sans-serif;color:#1a1a1a;letter-spacing:-0.099px;">Suchen in:</span>
<div class="r" style="left:1046px;top:730px;width:117px;height:92px;background:#fff;border:1px solid #8a8a8a;border-left:3px solid #9a9a9a"></div>
<div class="r" style="left:1049px;top:761px;width:113px;height:30px;background:linear-gradient(#70994a 0,#70994a 35%,#648c42 100%);border-top:1px solid #4d6b32"></div>
<span class="t k" style="left:1056.00px;top:737.88px;font:400 13.33px/17px 'Liberation Sans', sans-serif;color:#1a1a1a;letter-spacing:0.016px;">Formeln</span>
<span class="t k" style="left:1056.00px;top:767.88px;font:400 13.33px/17px 'Liberation Sans', sans-serif;color:#f2f6ea;letter-spacing:0.138px;">Werte</span>
<span class="t k" style="left:1056.00px;top:797.88px;font:400 13.33px/17px 'Liberation Sans', sans-serif;color:#1a1a1a;letter-spacing:0.069px;">Kommentare</span>
<div class="ann" style="left:634px;top:392px;width:34.500px;height:43.500px"></div>
<div class="ann" style="left:635px;top:476px;width:34px;height:48px"></div>
<div class="ann" style="left:561px;top:598px;width:172px;height:63px"></div>
<div class="ann" style="left:957px;top:760px;width:87px;height:37px"></div>
<div class="ann" style="left:1040px;top:726px;width:126.500px;height:100px;border-left-width:5px"></div>
<svg style="left:1151px;top:777px" width="13" height="20" viewBox="0 0 13 20"><path d="M1 1v15l3.5-3.2 2.6 6 2.4-1-2.6-5.8h4.6z" fill="#fff" stroke="#111" stroke-width="1.2"/></svg>
</body></html>
